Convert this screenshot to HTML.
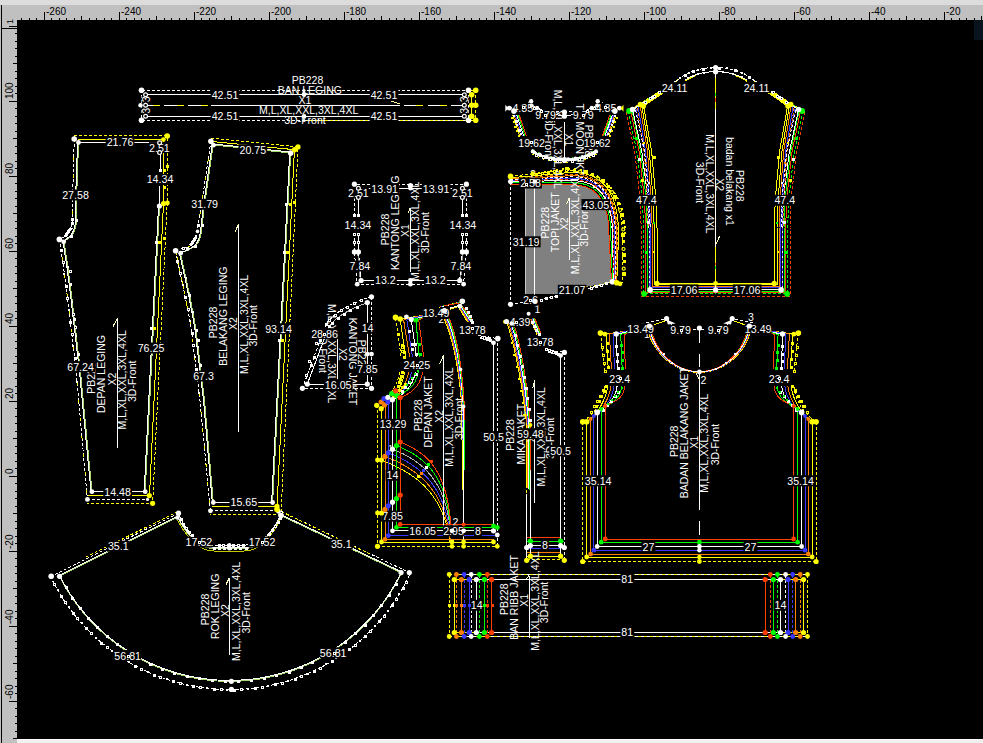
<!DOCTYPE html>
<html><head><meta charset="utf-8"><title>Pattern</title>
<style>
html,body{margin:0;padding:0;background:#000;overflow:hidden}
svg{display:block;position:absolute;left:0;top:0}
svg text{font-family:"Liberation Sans",sans-serif;font-size:10.67px;fill:#fff}
.tx text{font-size:10.5px}
svg text.rt{font-size:10px;fill:#000}
.ln polyline,.ln path{fill:none;stroke-width:1}
.ln path[fill]{}
</style></head><body>
<svg width="983" height="743" viewBox="0 0 983 743">
<rect x="0" y="0" width="983" height="743" fill="#000"/>
<g class="ln" shape-rendering="crispEdges" fill="none">
<polyline points="141.5,90 468.5,90" stroke="#ffffff" stroke-dasharray="3 2"/>
<polyline points="141.5,120 468.5,120" stroke="#ffffff" stroke-dasharray="3 2"/>
<polyline points="305,120 475.7,120" stroke="#ffff00" stroke-dasharray="3 2"/>
<polyline points="141.5,90 141.5,120" stroke="#ffffff" stroke-dasharray="3 2"/>
<polyline points="468.5,90 468.5,120" stroke="#ffffff" stroke-dasharray="3 2"/>
<polyline points="470.5,90 475.7,90" stroke="#ffff00" stroke-dasharray="3 2"/>
<polyline points="475.7,90 475.7,120" stroke="#ffff00" stroke-dasharray="3 2"/>
<polyline points="145.5,94 464.5,94" stroke="#ffffff"/>
<polyline points="145.5,116 464.5,116" stroke="#ffffff"/>
<polyline points="145.5,94 145.5,116" stroke="#ffffff"/>
<polyline points="464.5,94 464.5,116" stroke="#ffffff"/>
<polyline points="471.7,94 471.7,116" stroke="#ffff00"/>
<polyline points="146,105 152.8,105" stroke="#ffffff"/>
<polyline points="164.1,105 211,105" stroke="#ffffff" stroke-dasharray="12.5 11.4"/>
<polyline points="152.8,105 211,105" stroke="#ffff00" stroke-dasharray="7.3 16.6"/>
<polyline points="211,105 400,105" stroke="#ffffff"/>
<polyline points="404,105 464,105" stroke="#ffffff" stroke-dasharray="12 11.7"/>
<polyline points="416,105 464,105" stroke="#ffff00" stroke-dasharray="7 16.7"/>
<polyline points="391,101 400,104" stroke="#ffffa0"/>
<polyline points="78.5,142.5 77.3,180 76.4,200 76.4,219.5 76,225 74.8,230 72.8,234 70.3,236.5 67.5,239 63.7,241.8 65,248.4 66.2,255.9 67.5,264.2 68.7,273.3 70,282.9 71.2,292.9 72.5,303.3 73.7,313.8 74.9,324.4 76.2,335 80.5,372 92,491.5 145.2,491.5 159.5,206" stroke="#a8d870"/>
<polyline points="77.5,142.5 76.3,180 75.4,200 75.4,219.5 75,225 73.8,230 71.8,234 69.3,236.5 66.5,239 62.7,241.8 64,248.4 65.2,255.9 66.5,264.2 67.7,273.3 69,282.9 70.2,292.9 71.5,303.3 72.7,313.8 73.9,324.4 75.2,335 79.5,372 91,491.5" stroke="#ffffff"/>
<polyline points="158.5,206 144.2,491.5" stroke="#ffffff"/>
<polyline points="78.5,142.5 160,142.5" stroke="#ffffff"/>
<polyline points="92,491.5 145.2,491.5" stroke="#ffffff"/>
<polyline points="160,142.5 160,170.5" stroke="#ffffff"/>
<polyline points="160,186 159.5,206" stroke="#ffffff"/>
<polyline points="78,139.5 163.5,139.5 163.5,203 149.5,495.5 88,495.5" stroke="#ffff00"/>
<polyline points="74.2,139 73.2,180 72.2,200 72.2,224 71.2,228 65,236.5 59.4,239.4" stroke="#ffffff" stroke-dasharray="3 2"/>
<polyline points="74.2,139 73.2,180 72.2,200 72.2,224 71.2,228 65,236.5 59.4,239.4" stroke="#ffff00" stroke-dasharray="3 15"/>
<polyline points="59.4,239.4 60.8,249.4 62,256.9 63.3,265.2 64.5,274.3 65.8,283.9 67,293.9 68.3,304.3 69.5,314.8 70.7,325.4 72,336 76.3,373 87.4,499.4" stroke="#ffffff" stroke-dasharray="3 2"/>
<polyline points="59.4,239.4 60.8,249.4 62,256.9 63.3,265.2 64.5,274.3 65.8,283.9 67,293.9 68.3,304.3 69.5,314.8 70.7,325.4 72,336 76.3,373 87.4,499.4" stroke="#ffff00" stroke-dasharray="3 15"/>
<polyline points="87.4,499.4 149,499.4" stroke="#ffffff" stroke-dasharray="3 2"/>
<polyline points="74.2,135.5 167.2,135.5 167.2,203 152.6,503.3 87.4,503.3" stroke="#ffff00" stroke-dasharray="3 2"/>
<polyline points="74.2,135.5 74.2,139" stroke="#ffff00" stroke-dasharray="3 2"/>
<polyline points="117.5,318 117.5,448" stroke="#ffffff"/>
<polyline points="117.5,318 113,326.5" stroke="#ffffc0"/>
<polyline points="71.4,227.5 65.2,236.3" stroke="#ffffff" style="stroke-width:3"/>
<polyline points="290.7,153 213.2,145 203.7,211 202.3,225 201.3,233.3 199.8,239 197.5,243.5 194.2,246.5 188,250.3 180.4,253 182.1,260.6 183.8,268.2 185.5,275.9 187.2,283.7 188.8,291.5 190.4,299.3 191.9,307.1 193.4,314.8 194.7,322.4 196,330 204.4,399 213.3,502.5 272.6,502.5 290.7,153" stroke="#a8d870"/>
<polyline points="212.2,145 202.7,211 201.3,225 200.3,233.3 198.8,239 196.5,243.5 193.2,246.5 187,250.3 179.4,253 181.1,260.6 182.8,268.2 184.5,275.9 186.2,283.7 187.8,291.5 189.4,299.3 190.9,307.1 192.4,314.8 193.7,322.4 195,330 203.4,399 212.3,502.5" stroke="#ffffff"/>
<polyline points="289.7,153 271.6,502.5" stroke="#ffffff"/>
<polyline points="213.3,502.5 272.6,502.5" stroke="#ffffff"/>
<polyline points="213.2,144 290.7,152" stroke="#ffffff"/>
<polyline points="212,141.5 294.4,149.7 277,506.4 212,506.4" stroke="#ffff00"/>
<polyline points="210.9,141.2 200.4,212 198,225.3 196.6,236 190.5,245.6 186.7,247.5 175.6,250.5" stroke="#ffffff" stroke-dasharray="3 2"/>
<polyline points="210.9,141.2 200.4,212 198,225.3 196.6,236 190.5,245.6 186.7,247.5 175.6,250.5" stroke="#ffff00" stroke-dasharray="3 15"/>
<polyline points="175.6,250.7 177.6,261.6 179.3,269.2 181,276.9 182.7,284.7 184.3,292.5 185.9,300.3 187.4,308.1 188.9,315.8 190.2,323.4 191.5,331 199.9,400 210.4,510.8" stroke="#ffffff" stroke-dasharray="3 2"/>
<polyline points="175.6,250.7 177.6,261.6 179.3,269.2 181,276.9 182.7,284.7 184.3,292.5 185.9,300.3 187.4,308.1 188.9,315.8 190.2,323.4 191.5,331 199.9,400 210.4,510.8" stroke="#ffff00" stroke-dasharray="3 15"/>
<polyline points="210.4,510.8 276,510.8" stroke="#ffffff" stroke-dasharray="3 2"/>
<polyline points="210.9,138 298,146.9 281,514 210.4,514" stroke="#ffff00" stroke-dasharray="3 2"/>
<polyline points="176.1,252.2 178.1,263.1 179.8,270.7 181.5,278.4 183.2,286.2 184.8,294 186.4,301.8 187.9,309.6" stroke="#ffff00" stroke-dasharray="3 2"/>
<polyline points="238.5,224 238.5,432" stroke="#ffffff"/>
<polyline points="238.5,224 234.9,232.5" stroke="#ffffc0"/>
<polyline points="196.6,236.1 190.5,245.6" stroke="#ffffff" style="stroke-width:3"/>
<polyline points="281,518.1 278.7,522.5 276.2,527.1 273.3,531.6 270.1,535.9 266.6,540 262.8,543.6 258.6,546.6 254.1,549 249.2,550.5 244,551 214,551 214,551 209.1,550.6 204.5,549.3 200.2,547.2 196.2,544.5 192.5,541.3 189.1,537.6 185.9,533.5 182.8,529.1 180,524.5 177.3,519.8" stroke="#c8c800"/>
<polyline points="401.4,572.8 398.3,579.1 394.9,585.3 391.3,591.4 387.4,597.4 383.4,603.2 379.1,608.8 374.6,614.3 369.9,619.6 365,624.7 360,629.7 354.7,634.5 349.3,639 343.7,643.4 338,647.5 332.1,651.4 326,655.1 319.8,658.6 313.6,661.9 307.1,664.9 300.6,667.6 294,670.2 287.3,672.4 280.5,674.5 273.6,676.2 266.7,677.7 259.7,679 252.7,680 245.7,680.7 238.6,681.2 231.5,681.4 224.4,681.3 217.4,681 210.3,680.4 203.3,679.6 196.3,678.5 189.3,677.1 182.4,675.5 175.6,673.6 168.8,671.4 162.2,669 155.6,666.4 149.1,663.5 142.8,660.4 136.5,657.1 130.4,653.5 124.4,649.7 118.6,645.7 112.9,641.4 107.4,637 102.1,632.3 96.9,627.5 91.9,622.4 87.1,617.2 82.5,611.8 78.1,606.3 74,600.5 70,594.7 66.3,588.6 62.7,582.5 59.5,576.2" stroke="#a8d870"/>
<polyline points="401.4,571.8 398.3,578.1 394.9,584.3 391.3,590.4 387.4,596.4 383.4,602.2 379.1,607.8 374.6,613.3 369.9,618.6 365,623.7 360,628.7 354.7,633.5 349.3,638 343.7,642.4 338,646.5 332.1,650.4 326,654.1 319.8,657.6 313.6,660.9 307.1,663.9 300.6,666.6 294,669.2 287.3,671.4 280.5,673.5 273.6,675.2 266.7,676.7 259.7,678 252.7,679 245.7,679.7 238.6,680.2 231.5,680.4 224.4,680.3 217.4,680 210.3,679.4 203.3,678.6 196.3,677.5 189.3,676.1 182.4,674.5 175.6,672.6 168.8,670.4 162.2,668 155.6,665.4 149.1,662.5 142.8,659.4 136.5,656.1 130.4,652.5 124.4,648.7 118.6,644.7 112.9,640.4 107.4,636 102.1,631.3 96.9,626.5 91.9,621.4 87.1,616.2 82.5,610.8 78.1,605.3 74,599.5 70,593.7 66.3,587.6 62.7,581.5 59.5,575.2" stroke="#ffffff"/>
<polyline points="177.3,517.3 59.5,576.2" stroke="#a8d870"/>
<polyline points="177.3,516.3 59.5,575.2" stroke="#ffffff"/>
<polyline points="281,515.6 401.4,572.8" stroke="#a8d870"/>
<polyline points="281,514.6 401.4,571.8" stroke="#ffffff"/>
<polyline points="281,515.6 278.7,520 276.2,524.6 273.3,529.1 270.1,533.4 266.6,537.5 262.8,541.1 258.6,544.1 254.1,546.5 249.2,548 244,548.5 214,548.5 214,548.5 209.1,548.1 204.5,546.8 200.2,544.7 196.2,542 192.5,538.8 189.1,535.1 185.9,531 182.8,526.6 180,522 177.3,517.3" stroke="#a8d870"/>
<polyline points="281,514.6 278.7,519 276.2,523.6 273.3,528.1 270.1,532.4 266.6,536.5 262.8,540.1 258.6,543.1 254.1,545.5 249.2,547 244,547.5 214,547.5 214,547.5 209.1,547.1 204.5,545.8 200.2,543.7 196.2,541 192.5,537.8 189.1,534.1 185.9,530 182.8,525.6 180,521 177.3,516.3" stroke="#ffffff"/>
<polyline points="409.1,575.6 405.8,582.3 402.3,588.9 398.5,595.3 394.5,601.5 390.3,607.6 385.8,613.6 381.1,619.3 376.2,624.9 371.1,630.3 365.7,635.5 360.2,640.5 354.6,645.3 348.7,649.9 342.7,654.2 336.5,658.4 330.1,662.2 323.7,665.9 317,669.3 310.3,672.4 303.5,675.3 296.5,678 289.5,680.4 282.3,682.5 275.1,684.3 267.9,685.9 260.5,687.2 253.2,688.2 245.8,688.9 238.4,689.4 230.9,689.6 223.5,689.5 216.1,689.1 208.6,688.5 201.3,687.6 193.9,686.4 186.6,684.9 179.4,683.1 172.3,681.1 165.2,678.8 158.2,676.3 151.3,673.5 144.5,670.4 137.9,667.1 131.3,663.6 125,659.8 118.7,655.7 112.6,651.4 106.7,646.9 100.9,642.2 95.4,637.3 90,632.2 84.8,626.8 79.8,621.3 75.1,615.6 70.5,609.7 66.2,603.7 62.1,597.5 58.2,591.1 54.6,584.6 51.2,578" stroke="#ffffff" stroke-dasharray="3 2"/>
<polyline points="178.5,513.2 51.2,576.3" stroke="#ffffff" stroke-dasharray="3 2"/>
<polyline points="178,511.5 86,557" stroke="#ffff00" stroke-dasharray="3 2"/>
<polyline points="281.5,511.5 409.3,572.6" stroke="#ffffff" stroke-dasharray="3 2"/>
<polyline points="277,509.5 372,555" stroke="#ffff00" stroke-dasharray="3 2"/>
<polyline points="283,512 281,516.6 278.5,521.2 275.6,525.7 272.3,530.1 268.6,534.1 264.6,537.7 260.4,540.7 255.8,543 251,544.5 246,545 212,545 212,545 207.3,544.5 202.9,543.1 198.7,540.9 194.9,538.1 191.3,534.6 188.1,530.8 185.1,526.6 182.6,522.2 180.3,517.7 178.5,513.2" stroke="#ffffff" stroke-dasharray="3 2"/>
<polyline points="51.2,576.3 51.2,578" stroke="#ffffff" stroke-dasharray="3 2"/>
<polyline points="409.3,572.6 409.1,575.6" stroke="#ffffff" stroke-dasharray="3 2"/>
<polyline points="229.4,577.5 229.4,655" stroke="#ffffff"/>
<polyline points="229.4,577.5 225.6,585.5" stroke="#ffffc0"/>
<polyline points="410.4,184.2 354.4,184.2 354.4,215" stroke="#ffffff" stroke-dasharray="3 2"/>
<polyline points="410.4,188.3 358.4,188.3 358.4,215" stroke="#ffffff"/>
<polyline points="354.4,233 354.4,252 357.2,284.2 410.4,284.2" stroke="#ffffff" stroke-dasharray="3 2"/>
<polyline points="358.4,233 358.4,252 361.1,280.5 410.4,280.5" stroke="#ffffff"/>
<polyline points="357.6,252 360.3,280.5" stroke="#909090"/>
<polyline points="410.4,184.2 466.4,184.2 466.4,215" stroke="#ffffff" stroke-dasharray="3 2"/>
<polyline points="410.4,188.3 462.4,188.3 462.4,215" stroke="#ffffff"/>
<polyline points="466.4,233 466.4,252 463.6,284.2 410.4,284.2" stroke="#ffffff" stroke-dasharray="3 2"/>
<polyline points="462.4,233 462.4,252 459.7,280.5 410.4,280.5" stroke="#ffffff"/>
<polyline points="463.2,252 460.5,280.5" stroke="#909090"/>
<polyline points="410.4,207.5 410.4,272" stroke="#ffffff"/>
<polyline points="410.4,207.5 408.2,212.5" stroke="#ffffc0"/>
<polyline points="307.3,384.1 329.1,325.9" stroke="#ffffff"/>
<polyline points="329.1,325.9 331.4,323.3 334.1,320.7 337.1,318.2 340.5,315.7 344.3,313.3 348.4,311 352.7,308.8 357.3,306.6 362.2,304.6 367.3,302.6" stroke="#c0c0c0"/>
<polyline points="367.3,302.6 367.3,384.1 307.3,384.1" stroke="#ffffff"/>
<polyline points="302.4,388.3 326.4,323.5" stroke="#ffffff" stroke-dasharray="3 2"/>
<polyline points="326.4,323.5 329,320.3 332.1,317.2 335.8,314.1 339.9,311.1 344.5,308.2 349.4,305.4 354.6,302.9 360.1,300.6 365.7,298.5 371.5,296.8" stroke="#ffffff" stroke-dasharray="3 2"/>
<polyline points="371.5,296.8 371.5,388.3 302.4,388.3" stroke="#ffffff" stroke-dasharray="3 2"/>
<polyline points="337.6,331.5 337.6,380" stroke="#ffffff"/>
<polyline points="395.5,318 401.3,357.6" stroke="#ffff00" stroke-dasharray="3 2"/>
<polyline points="400,372 398.6,377.7 396.7,382.9 394.3,387.6 391.5,391.9 388.2,395.8 384.7,399.3 380.8,402.4 376.7,405.3" stroke="#ffff00" stroke-dasharray="3 2"/>
<polyline points="377.5,405.3 377.5,546.3 497.3,546.3" stroke="#ffff00" stroke-dasharray="3 2"/>
<polyline points="497.3,546.3 497.3,339" stroke="#ffffff" stroke-dasharray="3 2"/>
<polyline points="400.2,319.5 440.2,312" stroke="#ffff00"/>
<polyline points="400.2,320 405.8,357" stroke="#ffff00"/>
<polyline points="404.8,372 403.3,378 401.3,383.9 398.7,389.5 395.8,394.8 392.5,399.4 388.9,403.4 385.2,406.4 381.5,408.5" stroke="#ffff00"/>
<polyline points="381.5,408.5 381.5,542 463.6,542" stroke="#ffff00"/>
<polyline points="381.5,460 387.1,462.3 392.8,464.8 398.4,467.6 403.9,470.6 409.3,473.9 414.5,477.5 419.6,481.5 424.4,486 428.9,490.9 433.2,496.4 437.1,502.4 440.6,508.9 443.6,516.2 446.3,524 448.4,532.6 450,542" stroke="#ffff00"/>
<polyline points="403.6,319.5 441,311.7" stroke="#ff8000"/>
<polyline points="403.6,320 409.7,357" stroke="#ff8000"/>
<polyline points="408.7,372 407.2,377.8 405.1,383.3 402.5,388.4 399.5,393 396.1,397 392.5,400.4 388.8,403.1 385,405" stroke="#ff8000"/>
<polyline points="385,405 385,539.3 463.6,539.3" stroke="#ff8000"/>
<polyline points="385,456.4 390.6,458.7 396.1,461.2 401.6,464 406.9,467 412.1,470.3 417.1,474 421.8,478 426.4,482.5 430.6,487.5 434.6,493 438.2,499 441.4,505.7 444.3,513 446.7,521 448.7,529.8 450.2,539.3" stroke="#ff8000"/>
<polyline points="406.9,319.5 441.8,311.4" stroke="#3838ff"/>
<polyline points="406.9,320 412.5,357" stroke="#3838ff"/>
<polyline points="411.5,372 410.1,377.7 408,382.9 405.5,387.5 402.5,391.5 399.2,395 395.7,397.9 392,400.2 388.3,402" stroke="#3838ff"/>
<polyline points="388.3,402 388.3,535.6 463.6,535.6" stroke="#3838ff"/>
<polyline points="388.3,452.8 393.9,455.1 399.3,457.6 404.6,460.4 409.8,463.4 414.7,466.7 419.5,470.4 424,474.4 428.3,478.9 432.3,483.9 435.9,489.4 439.3,495.4 442.3,502.1 444.9,509.4 447.2,517.4 449,526.1 450.4,535.6" stroke="#3838ff"/>
<polyline points="411.4,320 442.6,311.1" stroke="#ffffff"/>
<polyline points="411.4,320 416.4,357" stroke="#ffffff"/>
<polyline points="415.4,372 414,377.6 412,382.5 409.5,386.7 406.6,390.3 403.3,393.4 399.9,395.9 396.2,398 392.5,399.7" stroke="#ffffff"/>
<polyline points="392.5,399.7 392.5,530.8 493.5,530.8" stroke="#ffffff"/>
<polyline points="392.5,449.2 398,451.5 403.4,454 408.5,456.8 413.4,459.8 418.1,463.1 422.5,466.7 426.7,470.7 430.6,475.1 434.2,480.1 437.6,485.5 440.6,491.4 443.3,498 445.7,505.1 447.7,513 449.3,521.5 450.6,530.8" stroke="#b0b0b0"/>
<polyline points="415.9,320 443.4,310.8" stroke="#00ff00"/>
<polyline points="415.9,320 419.2,357" stroke="#00ff00"/>
<polyline points="418.2,372 416.8,377.4 414.9,381.9 412.7,385.4 410,388.2 407,390.5 403.7,392.4 400.2,394 396.5,395.5" stroke="#00ff00"/>
<polyline points="396.5,395.5 396.5,527.4 463.6,527.4" stroke="#00ff00"/>
<polyline points="396.5,445.6 402,447.9 407.2,450.4 412.2,453.2 416.9,456.2 421.3,459.5 425.4,463.1 429.3,467.1 432.9,471.6 436.2,476.5 439.2,481.9 441.9,487.9 444.3,494.5 446.4,501.6 448.1,509.5 449.6,518.1 450.8,527.4" stroke="#00ff00"/>
<polyline points="418.7,320 444.2,310.5" stroke="#ff4000"/>
<polyline points="418.7,320 423.7,357" stroke="#ff4000"/>
<polyline points="422.7,372 421.3,377.5 419.3,382.2 416.9,386 414.1,389.2 410.9,391.9 407.5,394.1 403.9,395.9 400.2,397.5" stroke="#ff4000"/>
<polyline points="400.2,397.5 400.2,524.4 463.6,524.4" stroke="#ff4000"/>
<polyline points="400.2,442 405.7,444.3 410.8,446.8 415.6,449.6 420.1,452.6 424.3,455.9 428.1,459.5 431.7,463.6 435,468.1 438,473 440.6,478.5 443,484.5 445.2,491.1 447,498.4 448.6,506.3 449.9,515 451,524.4" stroke="#ff4000"/>
<polyline points="463.6,530.8 493.5,530.8" stroke="#ffffff"/>
<polyline points="463.6,527.4 497.3,527.4" stroke="#00ff00"/>
<polyline points="463.6,535.6 497.3,535.6" stroke="#3838ff"/>
<polyline points="463.6,524.4 493.5,524.4" stroke="#ff4000"/>
<polyline points="463.6,539.3 493.5,539.3" stroke="#ff8000"/>
<polyline points="463.6,542 493.5,542" stroke="#ffff00"/>
<polyline points="440.3,311.5 442.2,315.1 444,319 445.8,323.1 447.5,327.6 449.1,332.4 450.7,337.4 452.2,342.8 453.6,348.4 454.9,354.4 456.1,360.8 457.3,367.4 458.4,374.4 459.4,381.8 460.3,389.5 461.1,397.6 461.8,406 461.8,440" stroke="#ffff00"/>
<polyline points="441.4,311.5 443.3,315.1 445.1,319 446.9,323.1 448.5,327.6 450.1,332.4 451.6,337.4 453.1,342.8 454.4,348.4 455.7,354.4 456.9,360.8 458,367.4 459,374.4 460,381.8 460.8,389.5 461.6,397.6 462.3,406 462.3,444" stroke="#ff8000"/>
<polyline points="442.5,311.5 444.4,315.1 446.2,319 447.9,323.1 449.6,327.6 451.1,332.4 452.6,337.4 454,342.8 455.3,348.4 456.5,354.4 457.7,360.8 458.7,367.4 459.7,374.4 460.6,381.8 461.4,389.5 462.2,397.6 462.8,406 462.8,448" stroke="#3838ff"/>
<polyline points="443.6,311.5 445.5,315.1 447.3,319 449,323.1 450.6,327.6 452.1,332.4 453.6,337.4 454.9,342.8 456.2,348.4 457.4,354.4 458.5,360.8 459.5,367.4 460.4,374.4 461.3,381.8 462,389.5 462.7,397.6 463.3,406 463.3,452" stroke="#ffffff"/>
<polyline points="444.7,311.5 446.6,315.1 448.4,319 450,323.1 451.6,327.6 453.1,332.4 454.5,337.4 455.8,342.8 457.1,348.4 458.2,354.4 459.2,360.8 460.2,367.4 461.1,374.4 461.9,381.8 462.6,389.5 463.2,397.6 463.8,406 463.8,456" stroke="#00ff00"/>
<polyline points="445.8,311.5 447.7,315.1 449.4,319 451.1,323.1 452.7,327.6 454.1,332.4 455.5,337.4 456.8,342.8 457.9,348.4 459,354.4 460,360.8 460.9,367.4 461.8,374.4 462.5,381.8 463.2,389.5 463.8,397.6 464.3,406 464.3,460" stroke="#ff4000"/>
<polyline points="463.6,406 463.6,546.3" stroke="#ffffff"/>
<polyline points="462.6,440 462.6,490" stroke="#ffff00"/>
<polyline points="464.6,420 464.6,470" stroke="#00ff00"/>
<polyline points="438.9,307.3 462.3,301.6" stroke="#ffff00"/>
<polyline points="457.5,305.2 467.6,322" stroke="#ffff00"/>
<polyline points="439.9,307 462.3,301.8" stroke="#ff8000"/>
<polyline points="458.5,305.4 468.6,321.7" stroke="#ff8000"/>
<polyline points="440.9,306.7 462.3,301.9" stroke="#3838ff"/>
<polyline points="459.5,305.6 469.6,321.4" stroke="#3838ff"/>
<polyline points="441.9,306.4 462.3,302.1" stroke="#ffffff"/>
<polyline points="460.5,305.8 470.6,321.1" stroke="#ffffff"/>
<polyline points="442.9,306.1 462.3,302.2" stroke="#00ff00"/>
<polyline points="461.5,306 471.6,320.8" stroke="#00ff00"/>
<polyline points="443.9,305.8 462.3,302.4" stroke="#ff4000"/>
<polyline points="462.5,306.2 472.6,320.5" stroke="#ff4000"/>
<polyline points="450.3,309.1 460.1,305.9" stroke="#ffff00"/>
<polyline points="450.3,308.1 460.1,304.9" stroke="#ffffff"/>
<polyline points="478,335.2 497.8,338.6" stroke="#ffffff" stroke-dasharray="3 2"/>
<polyline points="480,337.8 493.5,342.8 493.5,530.8" stroke="#ffffff"/>
<polyline points="443.5,355.5 443.5,527" stroke="#ffffff"/>
<polyline points="443.5,355.5 439.5,364.5" stroke="#ffffc0"/>
<polyline points="507,323 508.7,328.3 510.3,333.9 511.9,339.9 513.5,346.1 515,352.6 516.5,359.2 517.9,366 519.2,372.9 520.4,379.8 521.6,386.7 522.7,393.5 523.7,400.2 524.5,406.8 525.3,413.1 526,419.2 526.5,425 526.5,487" stroke="#ffff00"/>
<polyline points="530.5,319 537,334.5" stroke="#ffff00"/>
<polyline points="526.7,556.2 560.6,556.2" stroke="#ffff00"/>
<polyline points="508.3,323 510,328.3 511.6,333.9 513.2,339.9 514.7,346.1 516.2,352.6 517.6,359.2 519,366 520.3,372.9 521.5,379.8 522.6,386.7 523.6,393.5 524.6,400.2 525.4,406.8 526.1,413.1 526.7,419.2 527.2,425 527.2,487.8" stroke="#ff8000"/>
<polyline points="531.3,318.8 537.8,334.2" stroke="#ff8000"/>
<polyline points="526.7,552.2 560.6,552.2" stroke="#ff8000"/>
<polyline points="509.6,323 511.3,328.3 512.9,333.9 514.5,339.9 516,346.1 517.4,352.6 518.8,359.2 520.1,366 521.4,372.9 522.5,379.8 523.6,386.7 524.6,393.5 525.5,400.2 526.3,406.8 526.9,413.1 527.5,419.2 528,425 528,488.6" stroke="#3838ff"/>
<polyline points="532.1,318.6 538.6,333.9" stroke="#3838ff"/>
<polyline points="526.7,548.6 564.3,548.6" stroke="#3838ff"/>
<polyline points="510.9,323 512.6,328.3 514.2,333.9 515.7,339.9 517.2,346.1 518.6,352.6 520,359.2 521.2,366 522.4,372.9 523.5,379.8 524.6,386.7 525.5,393.5 526.4,400.2 527.1,406.8 527.8,413.1 528.3,419.2 528.8,425 528.8,489.4" stroke="#ffffff"/>
<polyline points="532.9,318.4 539.4,333.6" stroke="#ffffff"/>
<polyline points="526.7,545.5 560.6,545.5" stroke="#ffffff"/>
<polyline points="512.2,323 513.9,328.3 515.4,333.9 517,339.9 518.4,346.1 519.8,352.6 521.1,359.2 522.4,366 523.5,372.9 524.6,379.8 525.6,386.7 526.5,393.5 527.3,400.2 528,406.8 528.6,413.1 529.1,419.2 529.5,425 529.5,490.2" stroke="#00ff00"/>
<polyline points="533.7,318.2 540.2,333.3" stroke="#00ff00"/>
<polyline points="526.7,541.1 564.3,541.1" stroke="#00ff00"/>
<polyline points="513.5,323 515.2,328.3 516.7,333.9 518.2,339.9 519.7,346.1 521,352.6 522.3,359.2 523.5,366 524.6,372.9 525.6,379.8 526.6,386.7 527.4,393.5 528.2,400.2 528.8,406.8 529.4,413.1 529.9,419.2 530.2,425 530.2,491" stroke="#ff4000"/>
<polyline points="534.5,318 541,333" stroke="#ff4000"/>
<polyline points="526.7,537.5 560.6,537.5" stroke="#ff4000"/>
<polyline points="526.3,425 526.3,494" stroke="#ffff00" stroke-dasharray="3 2"/>
<polyline points="526.3,494 526.3,559.9" stroke="#ffffff"/>
<polyline points="530.4,470 530.4,556" stroke="#ffffff"/>
<polyline points="526.7,559.9 564.3,559.9" stroke="#ffff00" stroke-dasharray="3 2"/>
<polyline points="560.6,355.6 560.6,556.2" stroke="#ffffff"/>
<polyline points="564.4,352.4 564.4,559.9" stroke="#ffffff" stroke-dasharray="3 2"/>
<polyline points="545.6,349.4 564.4,352.4" stroke="#ffffff" stroke-dasharray="3 2"/>
<polyline points="548,352 560.6,355.6" stroke="#ffffff"/>
<polyline points="534.6,380 534.6,502.5" stroke="#ffffff"/>
<polyline points="534.6,380 532.8,388" stroke="#ffffc0"/>
<polyline points="512.6,114.8 519.8,136" stroke="#ffff00"/>
<polyline points="513.9,114.8 521.1,136" stroke="#ff8000"/>
<polyline points="515.2,114.8 522.4,136" stroke="#3838ff"/>
<polyline points="516.5,114.8 523.7,136" stroke="#ffffff"/>
<polyline points="517.8,114.8 525,136" stroke="#00ff00"/>
<polyline points="519.1,114.8 526.3,136" stroke="#ff4000"/>
<polyline points="509.3,108.2 531.1,101.3" stroke="#ffffff" stroke-dasharray="3 2"/>
<polyline points="513.9,111.1 531.7,105.6" stroke="#ffffff"/>
<polyline points="531.7,105.6 537,108" stroke="#ffffff"/>
<polyline points="537,108 552.4,114 564.4,116.2" stroke="#ffffff"/>
<polyline points="556.4,111.5 564.4,112.2" stroke="#ffffff" stroke-dasharray="3 2"/>
<polyline points="616.2,114.8 609,136" stroke="#ffff00"/>
<polyline points="614.9,114.8 607.7,136" stroke="#ff8000"/>
<polyline points="613.6,114.8 606.4,136" stroke="#3838ff"/>
<polyline points="612.3,114.8 605.1,136" stroke="#ffffff"/>
<polyline points="611,114.8 603.8,136" stroke="#00ff00"/>
<polyline points="609.7,114.8 602.5,136" stroke="#ff4000"/>
<polyline points="619.5,108.2 597.7,101.3" stroke="#ffffff" stroke-dasharray="3 2"/>
<polyline points="614.9,111.1 597.1,105.6" stroke="#ffffff"/>
<polyline points="597.1,105.6 591.8,108" stroke="#ffffff"/>
<polyline points="591.8,108 576.4,114 564.4,116.2" stroke="#ffffff"/>
<polyline points="572.4,111.5 564.4,112.2" stroke="#ffffff" stroke-dasharray="3 2"/>
<polyline points="531.7,151.2 533.8,152.3 535.9,153.4 537.9,154.4 540,155.2 542,156 544,156.8 546,157.4 548,158 550,158.5 552,158.9 554,159.2 556.1,159.5 558.1,159.7 560.2,159.9 562.3,160 564.4,160 566.6,160 568.7,159.9 570.8,159.7 572.8,159.5 574.9,159.2 576.9,158.9 578.9,158.5 581,158 583,157.4 585,156.8 587,156 589,155.2 591,154.4 593.1,153.4 595.1,152.3 597.2,151.2" stroke="#ffffff" style="stroke-width:3"/>
<polyline points="531.7,153.7 533.8,154.8 535.9,155.9 537.9,156.9 540,157.7 542,158.5 544,159.3 546,159.9 548,160.5 550,161 552,161.4 554,161.7 556.1,162 558.1,162.2 560.2,162.4 562.3,162.5 564.4,162.5 566.6,162.5 568.7,162.4 570.8,162.2 572.8,162 574.9,161.7 576.9,161.4 578.9,161 581,160.5 583,159.9 585,159.3 587,158.5 589,157.7 591,156.9 593.1,155.9 595.1,154.8 597.2,153.7" stroke="#ffff00" stroke-dasharray="2 4"/>
<polyline points="531.7,149.2 533.8,150.3 535.9,151.4 537.9,152.4 540,153.2 542,154 544,154.8 546,155.4 548,156 550,156.5 552,156.9 554,157.2 556.1,157.5 558.1,157.7 560.2,157.9 562.3,158 564.4,158 566.6,158 568.7,157.9 570.8,157.7 572.8,157.5 574.9,157.2 576.9,156.9 578.9,156.5 581,156 583,155.4 585,154.8 587,154 589,153.2 591,152.4 593.1,151.4 595.1,150.3 597.2,149.2" stroke="#00ff00" stroke-dasharray="1 6"/>
<polyline points="564.4,121.5 564.4,159.8" stroke="#ffffff"/>
<path d="M525.8 184.8 L572 184.8 C595 184.8 609 200 609 235 L611.3 282.3 L560 291.5 L560 293.5 L525.8 293.5 Z" stroke="none" style="fill:#808080;"/>
<polyline points="525.8,184.8 525.8,293.5" stroke="#c8c8c8"/>
<path d="M510.5 177.8 L572 172.3 C600.9 172.3 618.6 191.1 618.6 235 L616.8 282" stroke="#ffff00"/>
<path d="M510.5 179 L572 175.6 C599.5 175.6 616.4 193.4 616.4 235 L615.6 282" stroke="#ff8000"/>
<path d="M510.5 180.2 L572 178.2 C598.4 178.2 614.6 195.2 614.6 235 L614.6 282" stroke="#3838ff"/>
<path d="M510.5 181.5 L572 180.6 C597.2 180.6 612.6 196.9 612.6 235 L613.5 282" stroke="#ffffff"/>
<path d="M510.5 182.8 L572 182.6 C596.1 182.6 610.8 198.3 610.8 235 L612.5 282" stroke="#00ff00"/>
<path d="M510.5 184.6 L572 184.8 C594.9 184.8 609 199.9 609 235 L611.5 282" stroke="#ff4000"/>
<path d="M510.5 180.8 L572 179.4 C597.8 179.4 613.6 196.1 613.6 235 L614.1 282" stroke="#ff4000" stroke-dasharray="3 2"/>
<path d="M510.5 179.6 L572 176.9 C599 176.9 615.5 194.3 615.5 235 L615.1 282" stroke="#ffffff" stroke-dasharray="3 2"/>
<path d="M510.5 178.4 L572 174 C600.2 174 617.5 192.3 617.5 235 L616.2 282" stroke="#ff8000" stroke-dasharray="3 2"/>
<path d="M510.5 176.2 L566 170.3 C596 170.3 622 188 622.4 235 L622.8 283" stroke="#ffff00" stroke-dasharray="3 2"/>
<path d="M532 174 L566 168.8 C598 168.8 625 188 625 235" stroke="#ffff00" stroke-dasharray="2 4" style="stroke-width:2;"/>
<polyline points="510.5,181.5 510.5,304.3" stroke="#ffffff" stroke-dasharray="3 2"/>
<polyline points="510.5,304.3 534.8,301" stroke="#ffffff" stroke-dasharray="3 2"/>
<polyline points="534.8,181.5 534.8,301" stroke="#ffffff"/>
<polyline points="534.8,301 590,288 612.4,281.7" stroke="#ffffff" stroke-dasharray="2 3"/>
<polyline points="560,291.5 611.3,282.3" stroke="#ffff00" stroke-dasharray="2 3"/>
<polyline points="569.3,197.7 569.3,260" stroke="#ffffff"/>
<polyline points="569.3,197.7 566.8,203.7" stroke="#ffffc0"/>
<polyline points="678,79.8 680.3,78 682.5,76.5 684.8,75 687.2,73.8 689.5,72.6 691.8,71.6 694.2,70.8 696.6,70 699,69.4 701.3,68.9 703.7,68.5 706.1,68.1 708.5,67.9 710.9,67.7 713.2,67.6 715.6,67.6 717.9,67.6 720.3,67.7 722.6,67.9 725,68.1 727.4,68.5 729.7,68.9 732.1,69.4 734.5,70 736.9,70.8 739.2,71.6 741.6,72.6 744,73.8 746.3,75 748.7,76.5 751,78 753.3,79.8" stroke="#ffffff" stroke-dasharray="3 2"/>
<polyline points="684.7,80.4 686.6,79.2 688.6,78 690.5,77 692.4,76.1 694.3,75.3 696.2,74.6 698.1,74 700,73.5 702,73 703.9,72.6 705.8,72.3 707.7,72.1 709.7,71.9 711.7,71.8 713.6,71.7 715.6,71.7 717.5,71.7 719.5,71.8 721.4,71.9 723.3,72.1 725.3,72.3 727.2,72.6 729.2,73 731.1,73.5 733.1,74 735,74.6 737,75.3 739,76.1 741,77 743.1,78 745.1,79.2 747.2,80.4" stroke="#ffffff"/>
<polyline points="684.7,81.4 686.6,80.2 688.6,79 690.5,78 692.4,77.1 694.3,76.3 696.2,75.6" stroke="#ffff00"/>
<polyline points="735,75.6 737,76.3 739,77.1 741,78 743.1,79 745.1,80.2 747.2,81.4" stroke="#ffff00"/>
<polyline points="626.4,112.2 634.7,152 640,198 641.2,228 641.2,296 715.6,296" stroke="#ff4000" stroke-dasharray="3 2"/>
<polyline points="626.4,112.2 678,79.7" stroke="#ffff00" stroke-dasharray="3 2"/>
<polyline points="628.2,111.4 636.9,152 642.4,198 643.6,228 643.6,293.9 715.6,293.9" stroke="#00ff00" stroke-dasharray="3 2"/>
<polyline points="628.2,111.4 678,79.8" stroke="#00ff00" stroke-dasharray="3 2"/>
<polyline points="630.6,110.4 639.2,152 644.4,198 645.6,228 645.6,292.5 715.6,292.5" stroke="#ff4000"/>
<polyline points="630.6,110.4 678,79.9" stroke="#ffff00"/>
<polyline points="632,109.8 640.7,152 646,198 647.2,228 647.2,291.4 715.6,291.4" stroke="#00ff00"/>
<polyline points="632,109.8 678,79.9" stroke="#00ff00"/>
<polyline points="632.6,109.6 641.9,152 647.8,198 649,228 649,289.9 715.6,289.9" stroke="#ffffff"/>
<polyline points="632.6,109.6 678,79.9" stroke="#ffffff"/>
<polyline points="638.2,107.2 645.7,152 649.4,198 650.6,228 650.6,287.9 715.6,287.9" stroke="#3838ff"/>
<polyline points="638.2,107.2 678,80.2" stroke="#3838ff"/>
<polyline points="640.2,106.4 647.6,152 651,198 652.2,228 652.2,286.3 715.6,286.3" stroke="#ff8000"/>
<polyline points="640.2,106.4 678,80.2" stroke="#ff8000"/>
<polyline points="641.8,105.7 649.4,152 653,198 654.2,228 654.2,284.8 715.6,284.8" stroke="#ffff00"/>
<polyline points="641.8,105.7 678,80.3" stroke="#ffff00"/>
<polyline points="643.4,105 651.7,152 655.8,198 657,228 657,283.4 715.6,283.4" stroke="#ffff00"/>
<polyline points="643.4,105 678,80.4" stroke="#ffff00"/>
<polyline points="636.1,109 644.2,152 648.2,198 649.2,228 649.2,288" stroke="#3838ff" stroke-dasharray="3 2"/>
<polyline points="637.2,108.5 644.2,152 647.2,198 648.2,228" stroke="#ff8000" stroke-dasharray="3 2"/>
<polyline points="635.6,110 644.6,152 649.2,198 650.2,228" stroke="#ffffff" stroke-dasharray="3 2"/>
<polyline points="678,79.8 632.6,109.9" stroke="#ffffff"/>
<polyline points="663.6,92 643.4,105.5" stroke="#ffff00" style="stroke-width:2"/>
<polyline points="804.8,112.2 796.5,152 791.2,198 790,228 790,296 715.6,296" stroke="#ff4000" stroke-dasharray="3 2"/>
<polyline points="804.8,112.2 753.2,79.7" stroke="#ffff00" stroke-dasharray="3 2"/>
<polyline points="803,111.4 794.3,152 788.8,198 787.6,228 787.6,293.9 715.6,293.9" stroke="#00ff00" stroke-dasharray="3 2"/>
<polyline points="803,111.4 753.2,79.8" stroke="#00ff00" stroke-dasharray="3 2"/>
<polyline points="800.6,110.4 792,152 786.8,198 785.6,228 785.6,292.5 715.6,292.5" stroke="#ff4000"/>
<polyline points="800.6,110.4 753.2,79.9" stroke="#ffff00"/>
<polyline points="799.2,109.8 790.5,152 785.2,198 784,228 784,291.4 715.6,291.4" stroke="#00ff00"/>
<polyline points="799.2,109.8 753.2,79.9" stroke="#00ff00"/>
<polyline points="798.6,109.6 789.3,152 783.4,198 782.2,228 782.2,289.9 715.6,289.9" stroke="#ffffff"/>
<polyline points="798.6,109.6 753.2,79.9" stroke="#ffffff"/>
<polyline points="793,107.2 785.5,152 781.8,198 780.6,228 780.6,287.9 715.6,287.9" stroke="#3838ff"/>
<polyline points="793,107.2 753.2,80.2" stroke="#3838ff"/>
<polyline points="791,106.4 783.6,152 780.2,198 779,228 779,286.3 715.6,286.3" stroke="#ff8000"/>
<polyline points="791,106.4 753.2,80.2" stroke="#ff8000"/>
<polyline points="789.4,105.7 781.8,152 778.2,198 777,228 777,284.8 715.6,284.8" stroke="#ffff00"/>
<polyline points="789.4,105.7 753.2,80.3" stroke="#ffff00"/>
<polyline points="787.8,105 779.5,152 775.4,198 774.2,228 774.2,283.4 715.6,283.4" stroke="#ffff00"/>
<polyline points="787.8,105 753.2,80.4" stroke="#ffff00"/>
<polyline points="795.1,109 787,152 783,198 782,228 782,288" stroke="#3838ff" stroke-dasharray="3 2"/>
<polyline points="794,108.5 787,152 784,198 783,228" stroke="#ff8000" stroke-dasharray="3 2"/>
<polyline points="795.6,110 786.6,152 782,198 781,228" stroke="#ffffff" stroke-dasharray="3 2"/>
<polyline points="753.2,79.8 798.6,109.9" stroke="#ffffff"/>
<polyline points="767.6,92 787.8,105.5" stroke="#ffff00" style="stroke-width:2"/>
<polyline points="715.6,71.7 715.6,289.9" stroke="#ffffff"/>
<polyline points="715.6,78 715.6,109" stroke="#ffff00"/>
<polyline points="715.6,98 715.6,102" stroke="#ff4000"/>
<polyline points="715.6,93 715.6,96" stroke="#00ff00"/>
<polyline points="715.6,247 715.6,283" stroke="#ffff00"/>
<polyline points="715.6,266 715.6,269" stroke="#00ff00"/>
<polyline points="715.6,263 715.6,265" stroke="#ff4000"/>
<polyline points="715.6,245 719.7,236" stroke="#ffffc0"/>
<polyline points="600.6,333.1 604.9,372" stroke="#ffff00" stroke-dasharray="3 2"/>
<polyline points="604.9,386 604,391.8 602.4,397.2 600.3,402.3 597.6,407 594.5,411.2 590.9,415.1 587,418.6 582.7,421.7" stroke="#ffff00" stroke-dasharray="3 2"/>
<polyline points="582.7,421.7 582.7,561.5 699.4,561.5" stroke="#ffff00" stroke-dasharray="3 2"/>
<polyline points="606,334 649.4,327.7" stroke="#ffff00"/>
<polyline points="606,334 608.3,369" stroke="#ffff00"/>
<polyline points="607.8,386 606.8,391.3 605.1,396.8 602.8,402.1 600.1,407.2 596.9,411.9 593.6,416 590.1,419.3 586.7,421.7" stroke="#ffff00"/>
<polyline points="586.7,421.7 586.7,557 699.4,557" stroke="#ffff00"/>
<polyline points="609.4,334 649.4,327.3" stroke="#ff8000"/>
<polyline points="609.4,334 611.4,369" stroke="#ff8000"/>
<polyline points="610.9,386 610,391.2 608.4,396.4 606.2,401.3 603.6,405.9 600.6,410.1 597.4,413.7 594,416.7 590.6,419" stroke="#ff8000"/>
<polyline points="590.6,419 590.6,554.1 699.4,554.1" stroke="#ff8000"/>
<polyline points="613,334 649.4,326.9" stroke="#3838ff"/>
<polyline points="613,334 614.5,369" stroke="#3838ff"/>
<polyline points="614,386 613.1,391.1 611.5,395.9 609.3,400.3 606.7,404.4 603.8,408 600.5,411.2 597.2,413.8 593.8,416" stroke="#3838ff"/>
<polyline points="593.8,416 593.8,550.2 699.4,550.2" stroke="#3838ff"/>
<polyline points="616,334.5 649.4,326.5" stroke="#ffffff"/>
<polyline points="616,334 617.6,369" stroke="#ffffff"/>
<polyline points="617.1,386 616.2,390.9 614.6,395.3 612.5,399.2 610,402.6 607.1,405.5 603.9,408.1 600.6,410.4 597.2,412.4" stroke="#ffffff"/>
<polyline points="597.2,412.4 597.2,546.5 699.4,546.5" stroke="#ffffff"/>
<polyline points="620.7,334.5 649.4,326.1" stroke="#00ff00"/>
<polyline points="620.7,334 622.2,369" stroke="#00ff00"/>
<polyline points="621.7,386 620.8,390.8 619.1,394.8 616.9,398.1 614.3,400.9 611.2,403.2 608,405.3 604.6,407.2 601.2,409" stroke="#00ff00"/>
<polyline points="601.2,409 601.2,542.2 699.4,542.2" stroke="#00ff00"/>
<polyline points="624.3,334.5 649.4,325.7" stroke="#ff4000"/>
<polyline points="624.3,334 625.3,369" stroke="#ff4000"/>
<polyline points="624.8,386 623.9,390.7 622.4,394.3 620.3,397.2 617.8,399.4 615,401.2 611.8,402.7 608.6,404.3 605.2,406" stroke="#ff4000"/>
<polyline points="605.2,406 605.2,539 699.4,539" stroke="#ff4000"/>
<polyline points="647.3,327 648.7,333.1 650.8,339 653.6,344.6 657.1,349.9 661,354.7 665.5,359.1 670.4,362.9 675.7,366.2 681.3,368.9 687.2,370.8 693.2,372 699.4,372.4" stroke="#ffff00"/>
<polyline points="648,327 649.4,333.1 651.5,339 654.3,344.6 657.6,349.9 661.6,354.7 666,359 670.8,362.9 676,366.1 681.6,368.7 687.3,370.7 693.3,371.9 699.4,372.3" stroke="#ff8000"/>
<polyline points="648.7,327 650.1,333.1 652.2,339 654.9,344.6 658.2,349.8 662.1,354.6 666.4,358.9 671.2,362.8 676.3,366 681.8,368.6 687.5,370.5 693.4,371.7 699.4,372.1" stroke="#3838ff"/>
<polyline points="650.1,327 651.5,333.1 653.5,339 656.2,344.6 659.4,349.7 663.1,354.5 667.4,358.8 672,362.6 677,365.8 682.3,368.4 687.8,370.3 693.5,371.4 699.4,371.9" stroke="#00ff00"/>
<polyline points="650.8,327 652.1,333.1 654.2,339 656.8,344.5 660,349.7 663.7,354.4 667.8,358.7 672.4,362.5 677.3,365.7 682.5,368.2 688,370.1 693.6,371.3 699.4,371.7" stroke="#ff4000"/>
<polyline points="649.4,327 650.8,333.1 652.8,339 655.5,344.6 658.8,349.8 662.6,354.6 666.9,358.9 671.6,362.7 676.7,365.9 682,368.5 687.6,370.4 693.5,371.6 699.4,372" stroke="#ffffff"/>
<polyline points="641.4,324 666.6,318.5" stroke="#ffffff" stroke-dasharray="3 2"/>
<polyline points="666.6,318.5 671.9,325" stroke="#ffffff"/>
<polyline points="649.4,326.5 665.9,320.5" stroke="#ffff00"/>
<polyline points="798.2,333.1 793.9,372" stroke="#ffff00" stroke-dasharray="3 2"/>
<polyline points="793.9,386 794.8,391.8 796.4,397.2 798.5,402.3 801.2,407 804.3,411.2 807.9,415.1 811.8,418.6 816.1,421.7" stroke="#ffff00" stroke-dasharray="3 2"/>
<polyline points="816.1,421.7 816.1,561.5 699.4,561.5" stroke="#ffff00" stroke-dasharray="3 2"/>
<polyline points="792.8,334 749.4,327.7" stroke="#ffff00"/>
<polyline points="792.8,334 790.5,369" stroke="#ffff00"/>
<polyline points="791,386 792,391.3 793.7,396.8 796,402.1 798.7,407.2 801.9,411.9 805.2,416 808.7,419.3 812.1,421.7" stroke="#ffff00"/>
<polyline points="812.1,421.7 812.1,557 699.4,557" stroke="#ffff00"/>
<polyline points="789.4,334 749.4,327.3" stroke="#ff8000"/>
<polyline points="789.4,334 787.4,369" stroke="#ff8000"/>
<polyline points="787.9,386 788.8,391.2 790.4,396.4 792.6,401.3 795.2,405.9 798.2,410.1 801.4,413.7 804.8,416.7 808.2,419" stroke="#ff8000"/>
<polyline points="808.2,419 808.2,554.1 699.4,554.1" stroke="#ff8000"/>
<polyline points="785.8,334 749.4,326.9" stroke="#3838ff"/>
<polyline points="785.8,334 784.3,369" stroke="#3838ff"/>
<polyline points="784.8,386 785.7,391.1 787.3,395.9 789.5,400.3 792.1,404.4 795,408 798.3,411.2 801.6,413.8 805,416" stroke="#3838ff"/>
<polyline points="805,416 805,550.2 699.4,550.2" stroke="#3838ff"/>
<polyline points="782.8,334.5 749.4,326.5" stroke="#ffffff"/>
<polyline points="782.8,334 781.2,369" stroke="#ffffff"/>
<polyline points="781.7,386 782.6,390.9 784.2,395.3 786.3,399.2 788.8,402.6 791.7,405.5 794.9,408.1 798.2,410.4 801.6,412.4" stroke="#ffffff"/>
<polyline points="801.6,412.4 801.6,546.5 699.4,546.5" stroke="#ffffff"/>
<polyline points="778.1,334.5 749.4,326.1" stroke="#00ff00"/>
<polyline points="778.1,334 776.6,369" stroke="#00ff00"/>
<polyline points="777.1,386 778,390.8 779.7,394.8 781.9,398.1 784.5,400.9 787.6,403.2 790.8,405.3 794.2,407.2 797.6,409" stroke="#00ff00"/>
<polyline points="797.6,409 797.6,542.2 699.4,542.2" stroke="#00ff00"/>
<polyline points="774.5,334.5 749.4,325.7" stroke="#ff4000"/>
<polyline points="774.5,334 773.5,369" stroke="#ff4000"/>
<polyline points="774,386 774.9,390.7 776.4,394.3 778.5,397.2 781,399.4 783.8,401.2 787,402.7 790.2,404.3 793.6,406" stroke="#ff4000"/>
<polyline points="793.6,406 793.6,539 699.4,539" stroke="#ff4000"/>
<polyline points="751.5,327 750.1,333.1 748,339 745.2,344.6 741.7,349.9 737.8,354.7 733.3,359.1 728.4,362.9 723.1,366.2 717.5,368.9 711.6,370.8 705.6,372 699.4,372.4" stroke="#ffff00"/>
<polyline points="750.8,327 749.4,333.1 747.3,339 744.5,344.6 741.2,349.9 737.2,354.7 732.8,359 728,362.9 722.8,366.1 717.2,368.7 711.5,370.7 705.5,371.9 699.4,372.3" stroke="#ff8000"/>
<polyline points="750.1,327 748.7,333.1 746.6,339 743.9,344.6 740.6,349.8 736.7,354.6 732.4,358.9 727.6,362.8 722.5,366 717,368.6 711.3,370.5 705.4,371.7 699.4,372.1" stroke="#3838ff"/>
<polyline points="748.7,327 747.3,333.1 745.3,339 742.6,344.6 739.4,349.7 735.7,354.5 731.4,358.8 726.8,362.6 721.8,365.8 716.5,368.4 711,370.3 705.3,371.4 699.4,371.9" stroke="#00ff00"/>
<polyline points="748,327 746.7,333.1 744.6,339 742,344.5 738.8,349.7 735.1,354.4 731,358.7 726.4,362.5 721.5,365.7 716.3,368.2 710.8,370.1 705.2,371.3 699.4,371.7" stroke="#ff4000"/>
<polyline points="749.4,327 748,333.1 746,339 743.3,344.6 740,349.8 736.2,354.6 731.9,358.9 727.2,362.7 722.1,365.9 716.8,368.5 711.2,370.4 705.3,371.6 699.4,372" stroke="#ffffff"/>
<polyline points="757.4,324 732.2,318.5" stroke="#ffffff" stroke-dasharray="3 2"/>
<polyline points="732.2,318.5 726.9,325" stroke="#ffffff"/>
<polyline points="749.4,326.5 732.9,320.5" stroke="#ffff00"/>
<polyline points="699.4,328 699.4,342.7" stroke="#ffffff"/>
<polyline points="699.4,354 699.4,367" stroke="#ffffff"/>
<polyline points="693.4,329 705.4,329" stroke="#ffffff" stroke-dasharray="3 1"/>
<polyline points="699.4,372 699.4,510" stroke="#ffffff"/>
<polyline points="699.4,520.5 699.4,535" stroke="#ffffff"/>
<polyline points="699.4,380 695.9,372.5" stroke="#ffffc0"/>
<polyline points="456.4,574.5 800.2,574.5" stroke="#ffff00"/>
<polyline points="449.2,574.5 807.5,574.5" stroke="#ffffff" stroke-dasharray="3 3"/>
<polyline points="456.4,636.5 800.2,636.5" stroke="#ffff00"/>
<polyline points="449.2,636.5 807.5,636.5" stroke="#ffffff" stroke-dasharray="3 3"/>
<polyline points="454.3,579.5 803.5,579.5" stroke="#ffffff"/>
<polyline points="454.3,632.5 803.5,632.5" stroke="#ffffff"/>
<polyline points="454.3,579.5 476,579.5" stroke="#ffff00"/>
<polyline points="454.3,632.5 476,632.5" stroke="#ffff00"/>
<polyline points="781,579.5 803.5,579.5" stroke="#ffff00"/>
<polyline points="781,632.5 803.5,632.5" stroke="#ffff00"/>
<polyline points="449.2,574.5 449.2,636.5" stroke="#ffff00" stroke-dasharray="3 2"/>
<polyline points="454.3,579.5 454.3,632.5" stroke="#ffff00"/>
<polyline points="807.5,574.5 807.5,636.5" stroke="#ffff00" stroke-dasharray="3 2"/>
<polyline points="803.5,579.5 803.5,632.5" stroke="#ffff00"/>
<polyline points="456.4,574.5 456.4,636.5" stroke="#ff8000" stroke-dasharray="3 2"/>
<polyline points="461.4,579.5 461.4,632.5" stroke="#ff8000"/>
<polyline points="800.2,574.5 800.2,636.5" stroke="#ff8000" stroke-dasharray="3 2"/>
<polyline points="795.7,579.5 795.7,632.5" stroke="#ff8000"/>
<polyline points="464.1,574.5 464.1,636.5" stroke="#3838ff" stroke-dasharray="3 2"/>
<polyline points="469.2,579.5 469.2,632.5" stroke="#3838ff"/>
<polyline points="792.7,574.5 792.7,636.5" stroke="#3838ff" stroke-dasharray="3 2"/>
<polyline points="788,579.5 788,632.5" stroke="#3838ff"/>
<polyline points="471.2,574.5 471.2,636.5" stroke="#ffffff" stroke-dasharray="3 2"/>
<polyline points="476.3,579.5 476.3,632.5" stroke="#ffffff"/>
<polyline points="785.6,574.5 785.6,636.5" stroke="#ffffff" stroke-dasharray="3 2"/>
<polyline points="780.5,579.5 780.5,632.5" stroke="#ffffff"/>
<polyline points="479.4,574.5 479.4,636.5" stroke="#00ff00" stroke-dasharray="3 2"/>
<polyline points="484.4,579.5 484.4,632.5" stroke="#00ff00"/>
<polyline points="777.4,574.5 777.4,636.5" stroke="#00ff00" stroke-dasharray="3 2"/>
<polyline points="773.4,579.5 773.4,632.5" stroke="#00ff00"/>
<polyline points="487.3,574.5 487.3,636.5" stroke="#ff4000" stroke-dasharray="3 2"/>
<polyline points="491.6,579.5 491.6,632.5" stroke="#ff4000"/>
<polyline points="770.3,574.5 770.3,636.5" stroke="#ff4000" stroke-dasharray="3 2"/>
<polyline points="765.2,579.5 765.2,632.5" stroke="#ff4000"/>
<polyline points="529,575.5 529,637.5" stroke="#ffffff"/>
<polyline points="529,575.5 526,579.5" stroke="#ffffc0"/>
</g>
<g class="tx">
<text x="307.5" y="83.9" text-anchor="middle">PB228</text>
<text x="309.8" y="94" text-anchor="middle">BAN LEGING</text>
<text x="305" y="104.1" text-anchor="middle">X1</text>
<text x="308.7" y="114.2" text-anchor="middle">M,L,XL,XXL,3XL,4XL</text>
<text x="305" y="124.3" text-anchor="middle">3D-Front</text>
<text transform="translate(94.8 393.8) rotate(-90)">PB228</text>
<text transform="translate(104.5 413) rotate(-90)">DEPAN LEGING</text>
<text transform="translate(115.8 385.5) rotate(-90)">X2</text>
<text transform="translate(126.2 429.5) rotate(-90)">M,L,XL,XXL,3XL,4XL</text>
<text transform="translate(136.2 402) rotate(-90)">3D-Front</text>
<text transform="translate(217.1 338.2) rotate(-90)">PB228</text>
<text transform="translate(226.8 365.8) rotate(-90)">BELAKANG LEGING</text>
<text transform="translate(237 330) rotate(-90)">X2</text>
<text transform="translate(247.6 374) rotate(-90)">M,L,XL,XXL,3XL,4XL</text>
<text transform="translate(257.1 346.5) rotate(-90)">3D-Front</text>
<text transform="translate(208.8 625.2) rotate(-90)">PB228</text>
<text transform="translate(218.8 639) rotate(-90)">ROK LEGING</text>
<text transform="translate(229.1 617) rotate(-90)">X2</text>
<text transform="translate(239.8 661) rotate(-90)">M,L,XL,XXL,3XL,4XL</text>
<text transform="translate(249.5 633.5) rotate(-90)">3D-Front</text>
<text transform="translate(389.3 245.2) rotate(-90)">PB228</text>
<text transform="translate(398.8 270) rotate(-90)">KANTONG LEGING</text>
<text transform="translate(408.9 237) rotate(-90)">X1</text>
<text transform="translate(419 281) rotate(-90)">M,L,XL,XXL,3XL,4XL</text>
<text transform="translate(429.1 253.5) rotate(-90)">3D-Front</text>
<text transform="translate(358 339.8) rotate(90)">PB228</text>
<text transform="translate(348.9 317.8) rotate(90)">KANTONG JAKET</text>
<text transform="translate(338.9 348) rotate(90)">X2</text>
<text transform="translate(328.4 304) rotate(90)">M,L,XL,XXL,3XL,4XL</text>
<text transform="translate(318.6 331.5) rotate(90)">3D-Front</text>
<text x="438.5" y="322.5">2</text>
<text x="452.5" y="526">2</text>
<text x="388" y="451" style="font-size:9px">1</text>
<text transform="translate(422.3 430.9) rotate(-90)">PB228</text>
<text transform="translate(432.3 447.4) rotate(-90)">DEPAN JAKET</text>
<text transform="translate(443 422.7) rotate(-90)">X2</text>
<text transform="translate(452.8 466.7) rotate(-90)">M,L,XL,XXL,3XL,4XL</text>
<text transform="translate(462.8 439.2) rotate(-90)">3D-Front</text>
<text transform="translate(514 450.8) rotate(-90)">PB228</text>
<text transform="translate(524.5 464.5) rotate(-90)">MIKA JAKET</text>
<text transform="translate(534.8 442.5) rotate(-90)">X1</text>
<text transform="translate(545.3 486.5) rotate(-90)">M,L,XL,XXL,3XL,4XL</text>
<text transform="translate(554.3 459) rotate(-90)">3D-Front</text>
<text transform="translate(585.4 124.8) rotate(90)">PB228</text>
<text transform="translate(575.8 103.6) rotate(90)" style="white-space:pre">T   .MOON JKT</text>
<text transform="translate(565 133.5) rotate(90)">X1</text>
<text transform="translate(554.4 89.7) rotate(90)">M,L,XL,XXL,3XL,4XL</text>
<text transform="translate(544.9 117.5) rotate(90)">3D-Front</text>
<text x="530" y="178">2</text>
<text x="534.5" y="312.5">1</text>
<text transform="translate(548.8 238.4) rotate(-90)">PB228</text>
<text transform="translate(558.7 252.2) rotate(-90)">TOPI JAKET</text>
<text transform="translate(568.4 230.2) rotate(-90)">X2</text>
<text transform="translate(578.5 274.2) rotate(-90)">M,L,XL,XXL,3XL,4XL</text>
<text transform="translate(588.2 246.7) rotate(-90)">3D-Front</text>
<text transform="translate(735.8 170.1) rotate(90)">PB228</text>
<text transform="translate(726.1 137.1) rotate(90)">badan belakang x1</text>
<text transform="translate(715.9 178.3) rotate(90)">X2</text>
<text transform="translate(705.7 134.3) rotate(90)">M,L,XL,XXL,3XL,4XL</text>
<text transform="translate(696 161.8) rotate(90)">3D-Front</text>
<text x="748" y="321">3</text>
<text x="700.5" y="383.5">2</text>
<text x="644" y="338">1</text>
<text transform="translate(677.8 457.1) rotate(-90)">PB228</text>
<text transform="translate(687.6 498.3) rotate(-90)">BADAN BELAKANG JAKET</text>
<text transform="translate(698.1 448.8) rotate(-90)">X1</text>
<text transform="translate(707.9 492.8) rotate(-90)">M,L,XL,XXL,3XL,4XL</text>
<text transform="translate(718.8 465.3) rotate(-90)">3D-Front</text>
<text transform="translate(508 615) rotate(-90)">PB228</text>
<text transform="translate(518.1 639.7) rotate(-90)">BAN RIBB JAKET</text>
<text transform="translate(528.3 606.7) rotate(-90)">X1</text>
<text transform="translate(538.5 650.7) rotate(-90)">M,L,XL,XXL,3XL,4XL</text>
<text transform="translate(548.3 623.2) rotate(-90)">3D-Front</text>
</g>
<g class="lb">
<rect x="210.7" y="89.2" width="28.7" height="11" fill="#000"/>
<text x="225" y="98.6" text-anchor="middle">42.51</text>
<rect x="369.7" y="89.2" width="28.7" height="11" fill="#000"/>
<text x="384" y="98.6" text-anchor="middle">42.51</text>
<rect x="210.7" y="110.9" width="28.7" height="11" fill="#000"/>
<text x="225" y="120.3" text-anchor="middle">42.51</text>
<rect x="369.7" y="110.9" width="28.7" height="11" fill="#000"/>
<text x="384" y="120.3" text-anchor="middle">42.51</text>
<rect x="141.6" y="95.8" width="8" height="7" fill="#000"/>
<text transform="translate(149.5 102.3) rotate(-90)">3</text>
<rect x="141.6" y="107.2" width="8" height="7" fill="#000"/>
<text transform="translate(149.5 113.7) rotate(-90)">3</text>
<rect x="460.3" y="95.8" width="8" height="7" fill="#000"/>
<text transform="translate(468.2 102.3) rotate(-90)">3</text>
<rect x="460.3" y="107.2" width="8" height="7" fill="#000"/>
<text transform="translate(468.2 113.7) rotate(-90)">3</text>
<rect x="105.7" y="137" width="28.7" height="11" fill="#000"/>
<text x="120" y="146.4" text-anchor="middle">21.76</text>
<rect x="149" y="142.1" width="20.8" height="11" fill="#000"/>
<text x="159.4" y="151.5" text-anchor="middle">2.51</text>
<rect x="145.7" y="174" width="28.7" height="11" fill="#000"/>
<text x="160" y="183.4" text-anchor="middle">14.34</text>
<rect x="61.2" y="189.5" width="28.7" height="11" fill="#000"/>
<text x="75.5" y="198.9" text-anchor="middle">27.58</text>
<rect x="66.3" y="361.2" width="28.7" height="11" fill="#000"/>
<text x="80.6" y="370.6" text-anchor="middle">67.24</text>
<rect x="136.7" y="342.5" width="28.7" height="11" fill="#000"/>
<text x="151" y="351.9" text-anchor="middle">76.25</text>
<rect x="103.3" y="486.2" width="28.7" height="11" fill="#000"/>
<text x="117.6" y="495.6" text-anchor="middle">14.48</text>
<rect x="238.5" y="144.2" width="28.7" height="11" fill="#000"/>
<text x="252.8" y="153.6" text-anchor="middle">20.75</text>
<rect x="190.4" y="198.8" width="28.7" height="11" fill="#000"/>
<text x="204.7" y="208.2" text-anchor="middle">31.79</text>
<rect x="192.1" y="370.5" width="22.8" height="11" fill="#000"/>
<text x="203.5" y="379.9" text-anchor="middle">67.3</text>
<rect x="264.2" y="323.2" width="28.7" height="11" fill="#000"/>
<text x="278.5" y="332.6" text-anchor="middle">93.14</text>
<rect x="229.5" y="497" width="28.7" height="11" fill="#000"/>
<text x="243.8" y="506.4" text-anchor="middle">15.65</text>
<rect x="106.9" y="540.7" width="22.8" height="11" fill="#000"/>
<text x="118.3" y="550.1" text-anchor="middle">35.1</text>
<rect x="329.9" y="538.6" width="22.8" height="11" fill="#000"/>
<text x="341.3" y="548" text-anchor="middle">35.1</text>
<rect x="185.6" y="536.6" width="26.7" height="11" fill="#000"/>
<text x="198.9" y="546" text-anchor="middle">17.52</text>
<rect x="248.7" y="536.6" width="26.7" height="11" fill="#000"/>
<text x="262" y="546" text-anchor="middle">17.52</text>
<rect x="114.4" y="650.1" width="26.7" height="11" fill="#000"/>
<text x="127.7" y="659.5" text-anchor="middle">56.81</text>
<rect x="319.9" y="647.3" width="26.7" height="11" fill="#000"/>
<text x="333.2" y="656.7" text-anchor="middle">56.81</text>
<rect x="370.4" y="183.4" width="28.7" height="11" fill="#000"/>
<text x="384.7" y="192.8" text-anchor="middle">13.91</text>
<rect x="348" y="187.5" width="20.8" height="11" fill="#000"/>
<text x="358.4" y="196.9" text-anchor="middle">2.51</text>
<rect x="343.6" y="219.1" width="28.7" height="11" fill="#000"/>
<text x="357.9" y="228.5" text-anchor="middle">14.34</text>
<rect x="348.5" y="260.5" width="22.8" height="11" fill="#000"/>
<text x="359.9" y="269.9" text-anchor="middle">7.84</text>
<rect x="374" y="275" width="22.8" height="11" fill="#000"/>
<text x="385.4" y="284.4" text-anchor="middle">13.2</text>
<rect x="421.8" y="183.4" width="28.7" height="11" fill="#000"/>
<text x="436.1" y="192.8" text-anchor="middle">13.91</text>
<rect x="452" y="187.5" width="20.8" height="11" fill="#000"/>
<text x="462.4" y="196.9" text-anchor="middle">2.51</text>
<rect x="448.6" y="219.1" width="28.7" height="11" fill="#000"/>
<text x="462.9" y="228.5" text-anchor="middle">14.34</text>
<rect x="449.5" y="260.5" width="22.8" height="11" fill="#000"/>
<text x="460.9" y="269.9" text-anchor="middle">7.84</text>
<rect x="424" y="275" width="22.8" height="11" fill="#000"/>
<text x="435.4" y="284.4" text-anchor="middle">13.2</text>
<rect x="360.7" y="322.8" width="13.9" height="11" fill="#000"/>
<text x="367.6" y="332.2" text-anchor="middle">14</text>
<rect x="355.9" y="364" width="22.8" height="11" fill="#000"/>
<text x="367.3" y="373.4" text-anchor="middle">7.85</text>
<rect x="323.9" y="379.1" width="28.7" height="11" fill="#000"/>
<text x="338.2" y="388.5" text-anchor="middle">16.05</text>
<rect x="311.2" y="328.2" width="26.7" height="11" fill="#000"/>
<text x="324.5" y="337.6" text-anchor="middle">28.86</text>
<rect x="422.7" y="308" width="26.7" height="11" fill="#000"/>
<text x="436" y="317.4" text-anchor="middle">13.49</text>
<rect x="402.5" y="359.3" width="28.7" height="11" fill="#000"/>
<text x="416.8" y="368.7" text-anchor="middle">24.25</text>
<rect x="459.1" y="324.1" width="26.7" height="11" fill="#000"/>
<text x="472.4" y="333.5" text-anchor="middle">13.78</text>
<rect x="378.7" y="418.8" width="28.7" height="11" fill="#000"/>
<text x="393" y="428.2" text-anchor="middle">13.29</text>
<rect x="385.6" y="469.8" width="13.9" height="11" fill="#000"/>
<text x="392.5" y="479.2" text-anchor="middle">14</text>
<rect x="381.1" y="510.7" width="22.8" height="11" fill="#000"/>
<text x="392.5" y="520.1" text-anchor="middle">7.85</text>
<rect x="408.4" y="525.3" width="28.7" height="11" fill="#000"/>
<text x="422.7" y="534.7" text-anchor="middle">16.05</text>
<rect x="443.1" y="525.3" width="20.8" height="11" fill="#000"/>
<text x="453.5" y="534.7" text-anchor="middle">2.95</text>
<rect x="474" y="525.3" width="7.9" height="11" fill="#000"/>
<text x="478" y="534.7" text-anchor="middle">8</text>
<rect x="482.1" y="431.1" width="22.8" height="11" fill="#000"/>
<text x="493.5" y="440.5" text-anchor="middle">50.5</text>
<rect x="509.7" y="316.2" width="20.8" height="11" fill="#000"/>
<text x="520.1" y="325.6" text-anchor="middle">4.39</text>
<rect x="526.7" y="336.9" width="26.7" height="11" fill="#000"/>
<text x="540" y="346.3" text-anchor="middle">13.78</text>
<rect x="516.1" y="428.2" width="28.7" height="11" fill="#000"/>
<text x="530.4" y="437.6" text-anchor="middle">59.48</text>
<rect x="549.2" y="445.2" width="22.8" height="11" fill="#000"/>
<text x="560.6" y="454.6" text-anchor="middle">50.5</text>
<rect x="540.9" y="540" width="7.9" height="11" fill="#000"/>
<text x="544.9" y="549.4" text-anchor="middle">8</text>
<rect x="512.4" y="102.7" width="20.8" height="11" fill="#000"/>
<text x="522.8" y="112.1" text-anchor="middle">4.35</text>
<rect x="535.2" y="110" width="20.8" height="11" fill="#000"/>
<text x="545.6" y="119.4" text-anchor="middle">9.79</text>
<rect x="518.3" y="137.8" width="26.7" height="11" fill="#000"/>
<text x="531.6" y="147.2" text-anchor="middle">19.62</text>
<rect x="595.6" y="102.7" width="20.8" height="11" fill="#000"/>
<text x="606" y="112.1" text-anchor="middle">4.35</text>
<rect x="572.8" y="110" width="20.8" height="11" fill="#000"/>
<text x="583.2" y="119.4" text-anchor="middle">9.79</text>
<rect x="583.9" y="137.8" width="26.7" height="11" fill="#000"/>
<text x="597.2" y="147.2" text-anchor="middle">19.62</text>
<rect x="511.9" y="236.3" width="28.7" height="11" fill="#000"/>
<text x="526.2" y="245.7" text-anchor="middle">31.19</text>
<rect x="581.5" y="199.1" width="28.7" height="11" fill="#000"/>
<text x="595.8" y="208.5" text-anchor="middle">43.05</text>
<rect x="557.8" y="284.8" width="28.7" height="11" fill="#000"/>
<text x="572.1" y="294.2" text-anchor="middle">21.07</text>
<rect x="519.1" y="177.5" width="22.8" height="11" fill="#000"/>
<text x="530.5" y="186.9" text-anchor="middle">2.58</text>
<rect x="523.1" y="294.7" width="14.8" height="11" fill="#000"/>
<text x="530.5" y="304.1" text-anchor="middle">2.6</text>
<rect x="660.3" y="82.1" width="28.7" height="11" fill="#000"/>
<text x="674.6" y="91.5" text-anchor="middle">24.11</text>
<rect x="635" y="194.8" width="22.8" height="11" fill="#000"/>
<text x="646.4" y="204.2" text-anchor="middle">47.4</text>
<rect x="669.8" y="284.4" width="28.7" height="11" fill="#000"/>
<text x="684.1" y="293.8" text-anchor="middle">17.06</text>
<rect x="742.3" y="82.1" width="28.7" height="11" fill="#000"/>
<text x="756.6" y="91.5" text-anchor="middle">24.11</text>
<rect x="773.4" y="194.8" width="22.8" height="11" fill="#000"/>
<text x="784.8" y="204.2" text-anchor="middle">47.4</text>
<rect x="732.8" y="284.4" width="28.7" height="11" fill="#000"/>
<text x="747.1" y="293.8" text-anchor="middle">17.06</text>
<rect x="627.3" y="323.1" width="26.7" height="11" fill="#000"/>
<text x="640.6" y="332.5" text-anchor="middle">13.49</text>
<rect x="670.2" y="324.9" width="20.8" height="11" fill="#000"/>
<text x="680.6" y="334.3" text-anchor="middle">9.79</text>
<rect x="608.3" y="373.1" width="22.8" height="11" fill="#000"/>
<text x="619.7" y="382.5" text-anchor="middle">23.4</text>
<rect x="583.9" y="475.3" width="28.7" height="11" fill="#000"/>
<text x="598.2" y="484.7" text-anchor="middle">35.14</text>
<rect x="641.5" y="541.5" width="13.9" height="11" fill="#000"/>
<text x="648.4" y="550.9" text-anchor="middle">27</text>
<rect x="744.9" y="323.1" width="26.7" height="11" fill="#000"/>
<text x="758.2" y="332.5" text-anchor="middle">13.49</text>
<rect x="707.8" y="324.9" width="20.8" height="11" fill="#000"/>
<text x="718.2" y="334.3" text-anchor="middle">9.79</text>
<rect x="767.7" y="373.1" width="22.8" height="11" fill="#000"/>
<text x="779.1" y="382.5" text-anchor="middle">23.4</text>
<rect x="786.3" y="475.3" width="28.7" height="11" fill="#000"/>
<text x="800.6" y="484.7" text-anchor="middle">35.14</text>
<rect x="743.5" y="541.5" width="13.9" height="11" fill="#000"/>
<text x="750.4" y="550.9" text-anchor="middle">27</text>
<rect x="469.8" y="599.8" width="13.9" height="11" fill="#000"/>
<text x="476.7" y="609.2" text-anchor="middle">14</text>
<rect x="773.6" y="599.8" width="13.9" height="11" fill="#000"/>
<text x="780.5" y="609.2" text-anchor="middle">14</text>
<rect x="620.4" y="574" width="13.9" height="11" fill="#000"/>
<text x="627.3" y="583.4" text-anchor="middle">81</text>
<rect x="620.4" y="627" width="13.9" height="11" fill="#000"/>
<text x="627.3" y="636.4" text-anchor="middle">81</text>
</g>
<g class="dt">
<circle cx="141.5" cy="90.3" r="2.8" fill="#ffffff"/>
<circle cx="468.5" cy="90.3" r="2.8" fill="#ffffff"/>
<circle cx="475.7" cy="90.3" r="2.8" fill="#ffff00"/>
<circle cx="141.5" cy="120.3" r="2.8" fill="#ffffff"/>
<circle cx="468.5" cy="120.3" r="2.8" fill="#ffffff"/>
<circle cx="475.7" cy="120.3" r="2.8" fill="#ffff00"/>
<circle cx="475.7" cy="105.2" r="2.8" fill="#ffff00"/>
<circle cx="140.5" cy="105.2" r="2.2" fill="#ffffff"/>
<circle cx="471.7" cy="94.7" r="2.8" fill="#ffff00"/>
<circle cx="471.7" cy="105.2" r="2.8" fill="#ffff00"/>
<circle cx="471.7" cy="116.3" r="2.8" fill="#ffff00"/>
<circle cx="145.6" cy="94.7" r="1.9" fill="#000" stroke="#ffffff" stroke-width="1.2"/>
<circle cx="464.3" cy="94.7" r="1.9" fill="#000" stroke="#ffffff" stroke-width="1.2"/>
<circle cx="145.6" cy="105.2" r="1.9" fill="#000" stroke="#ffffff" stroke-width="1.2"/>
<circle cx="464.3" cy="105.2" r="1.9" fill="#000" stroke="#ffffff" stroke-width="1.2"/>
<circle cx="145.6" cy="116.3" r="1.9" fill="#000" stroke="#ffffff" stroke-width="1.2"/>
<circle cx="464.3" cy="116.3" r="1.9" fill="#000" stroke="#ffffff" stroke-width="1.2"/>
<circle cx="304" cy="94.5" r="2.4" fill="#ffffff"/>
<circle cx="304" cy="116.5" r="2.4" fill="#ffffff"/>
<circle cx="304" cy="90.5" r="1.6" fill="#ffffff"/>
<circle cx="304" cy="120.5" r="1.6" fill="#ffffff"/>
<circle cx="74.2" cy="139" r="2.8" fill="#ffffff"/>
<circle cx="78.5" cy="142.5" r="2.4" fill="#ffffff"/>
<circle cx="159.6" cy="142.8" r="1.9" fill="#000" stroke="#ffffff" stroke-width="1.2"/>
<circle cx="159.6" cy="152.6" r="1.9" fill="#000" stroke="#ffffff" stroke-width="1.2"/>
<circle cx="167.2" cy="136" r="2.8" fill="#ffff00"/>
<circle cx="163.4" cy="139.6" r="2.4" fill="#ffff00"/>
<rect x="159" y="169" width="3" height="3" fill="#ffffff" shape-rendering="crispEdges"/>
<rect x="163" y="169" width="3" height="3" fill="#ffff00" shape-rendering="crispEdges"/>
<rect x="166" y="165" width="3" height="3" fill="#ffff00" shape-rendering="crispEdges"/>
<rect x="163" y="186" width="3" height="3" fill="#ffff00" shape-rendering="crispEdges"/>
<circle cx="159.4" cy="206" r="2.6" fill="#ffffff"/>
<circle cx="163.6" cy="203.5" r="2.6" fill="#ffff00"/>
<circle cx="167.4" cy="203" r="2.4" fill="#ffff00"/>
<circle cx="59.4" cy="239.4" r="2.8" fill="#ffffff"/>
<circle cx="63.7" cy="241.8" r="2.4" fill="#ffffff"/>
<rect x="75" y="219" width="3" height="3" fill="#ffffff" shape-rendering="crispEdges"/>
<rect x="71" y="218" width="3" height="3" fill="#ffffff" shape-rendering="crispEdges"/>
<rect x="71" y="222" width="3" height="3" fill="#ffffff" shape-rendering="crispEdges"/>
<rect x="70" y="235" width="3" height="3" fill="#ffffff" shape-rendering="crispEdges"/>
<rect x="60" y="249" width="3" height="3" fill="#ffffff" shape-rendering="crispEdges"/>
<rect x="62" y="261" width="3" height="3" fill="#ffffff" shape-rendering="crispEdges"/><rect x="63" y="262" width="1" height="1" fill="#000" shape-rendering="crispEdges"/>
<rect x="63" y="273" width="2" height="2" fill="#ffffff" shape-rendering="crispEdges"/>
<rect x="65" y="285" width="3" height="3" fill="#ffffff" shape-rendering="crispEdges"/>
<rect x="66" y="297" width="3" height="3" fill="#ffffff" shape-rendering="crispEdges"/><rect x="67" y="298" width="1" height="1" fill="#000" shape-rendering="crispEdges"/>
<rect x="68" y="309" width="2" height="2" fill="#ffffff" shape-rendering="crispEdges"/>
<rect x="69" y="321" width="3" height="3" fill="#ffffff" shape-rendering="crispEdges"/>
<rect x="71" y="333" width="3" height="3" fill="#ffffff" shape-rendering="crispEdges"/><rect x="72" y="334" width="1" height="1" fill="#000" shape-rendering="crispEdges"/>
<rect x="72" y="345" width="2" height="2" fill="#ffffff" shape-rendering="crispEdges"/>
<rect x="74" y="357" width="3" height="3" fill="#ffffff" shape-rendering="crispEdges"/>
<rect x="76" y="381" width="2" height="2" fill="#ffffff" shape-rendering="crispEdges"/>
<rect x="67" y="266" width="2" height="2" fill="#ffffff" shape-rendering="crispEdges"/>
<rect x="69" y="283" width="3" height="3" fill="#ffffff" shape-rendering="crispEdges"/>
<rect x="71" y="301" width="2" height="2" fill="#ffffff" shape-rendering="crispEdges"/>
<rect x="73" y="318" width="3" height="3" fill="#ffffff" shape-rendering="crispEdges"/>
<rect x="75" y="335" width="2" height="2" fill="#ffffff" shape-rendering="crispEdges"/>
<rect x="77" y="353" width="3" height="3" fill="#ffffff" shape-rendering="crispEdges"/>
<rect x="69" y="270" width="3" height="3" fill="#ffffff" shape-rendering="crispEdges"/><rect x="70" y="271" width="1" height="1" fill="#000" shape-rendering="crispEdges"/>
<rect x="72" y="313" width="3" height="3" fill="#ffffff" shape-rendering="crispEdges"/><rect x="73" y="314" width="1" height="1" fill="#000" shape-rendering="crispEdges"/>
<rect x="74" y="326" width="3" height="3" fill="#ffffff" shape-rendering="crispEdges"/><rect x="75" y="327" width="1" height="1" fill="#000" shape-rendering="crispEdges"/>
<rect x="150" y="327" width="3" height="3" fill="#ffffff" shape-rendering="crispEdges"/>
<rect x="153" y="327" width="3" height="3" fill="#ffff00" shape-rendering="crispEdges"/>
<rect x="155" y="241" width="3" height="3" fill="#ffffff" shape-rendering="crispEdges"/>
<rect x="158" y="241" width="3" height="3" fill="#ffff00" shape-rendering="crispEdges"/>
<rect x="163" y="237" width="3" height="3" fill="#ffff00" shape-rendering="crispEdges"/>
<circle cx="91.9" cy="491.7" r="2.4" fill="#ffffff"/>
<circle cx="87.4" cy="499.4" r="2.4" fill="#ffffff"/>
<circle cx="145.2" cy="491.7" r="2.4" fill="#ffffff"/>
<circle cx="149.3" cy="495.6" r="2.6" fill="#ffff00"/>
<circle cx="152.6" cy="503.3" r="2.6" fill="#ffff00"/>
<circle cx="147.5" cy="499.4" r="1.6" fill="#ffffff"/>
<circle cx="210.9" cy="141.2" r="2.8" fill="#ffffff"/>
<circle cx="213.4" cy="145.2" r="2.4" fill="#ffffff"/>
<circle cx="290.7" cy="153.1" r="2.8" fill="#ffffff"/>
<circle cx="294.6" cy="149.7" r="2.6" fill="#ffff00"/>
<circle cx="298" cy="146.9" r="2.6" fill="#ffff00"/>
<circle cx="175.6" cy="250.7" r="2.8" fill="#ffffff"/>
<circle cx="180.6" cy="253.2" r="2.4" fill="#ffffff"/>
<rect x="197" y="224" width="3" height="3" fill="#ffffff" shape-rendering="crispEdges"/>
<rect x="201" y="224" width="3" height="3" fill="#ffffff" shape-rendering="crispEdges"/>
<rect x="186" y="247" width="3" height="3" fill="#ffffff" shape-rendering="crispEdges"/>
<rect x="194" y="245" width="3" height="3" fill="#ffffff" shape-rendering="crispEdges"/>
<circle cx="197.5" cy="231.4" r="1.8" fill="#ffffff"/>
<rect x="182" y="247" width="3" height="3" fill="#ffffff" shape-rendering="crispEdges"/><rect x="183" y="248" width="1" height="1" fill="#000" shape-rendering="crispEdges"/>
<rect x="176" y="260" width="3" height="3" fill="#ffffff" shape-rendering="crispEdges"/>
<rect x="179" y="272" width="3" height="3" fill="#ffffff" shape-rendering="crispEdges"/><rect x="180" y="273" width="1" height="1" fill="#000" shape-rendering="crispEdges"/>
<rect x="182" y="284" width="2" height="2" fill="#ffffff" shape-rendering="crispEdges"/>
<rect x="184" y="296" width="3" height="3" fill="#ffffff" shape-rendering="crispEdges"/>
<rect x="187" y="308" width="3" height="3" fill="#ffffff" shape-rendering="crispEdges"/><rect x="188" y="309" width="1" height="1" fill="#000" shape-rendering="crispEdges"/>
<rect x="189" y="320" width="2" height="2" fill="#ffffff" shape-rendering="crispEdges"/>
<rect x="191" y="332" width="3" height="3" fill="#ffffff" shape-rendering="crispEdges"/>
<rect x="192" y="344" width="3" height="3" fill="#ffffff" shape-rendering="crispEdges"/><rect x="193" y="345" width="1" height="1" fill="#000" shape-rendering="crispEdges"/>
<rect x="194" y="356" width="2" height="2" fill="#ffffff" shape-rendering="crispEdges"/>
<rect x="195" y="368" width="3" height="3" fill="#ffffff" shape-rendering="crispEdges"/>
<rect x="198" y="392" width="2" height="2" fill="#ffffff" shape-rendering="crispEdges"/>
<rect x="185" y="277" width="2" height="2" fill="#ffffff" shape-rendering="crispEdges"/>
<rect x="188" y="294" width="3" height="3" fill="#ffffff" shape-rendering="crispEdges"/>
<rect x="192" y="311" width="2" height="2" fill="#ffffff" shape-rendering="crispEdges"/>
<rect x="195" y="329" width="3" height="3" fill="#ffffff" shape-rendering="crispEdges"/>
<rect x="197" y="346" width="2" height="2" fill="#ffffff" shape-rendering="crispEdges"/>
<rect x="199" y="364" width="3" height="3" fill="#ffffff" shape-rendering="crispEdges"/>
<rect x="285" y="203" width="3" height="3" fill="#ffffff" shape-rendering="crispEdges"/>
<rect x="289" y="203" width="3" height="3" fill="#ffff00" shape-rendering="crispEdges"/>
<rect x="293" y="201" width="3" height="3" fill="#ffff00" shape-rendering="crispEdges"/>
<rect x="283" y="251" width="3" height="3" fill="#ffffff" shape-rendering="crispEdges"/>
<rect x="286" y="251" width="3" height="3" fill="#ffff00" shape-rendering="crispEdges"/>
<rect x="278" y="339" width="3" height="3" fill="#ffffff" shape-rendering="crispEdges"/>
<rect x="281" y="339" width="3" height="3" fill="#ffff00" shape-rendering="crispEdges"/>
<rect x="197" y="339" width="3" height="3" fill="#ffffff" shape-rendering="crispEdges"/>
<circle cx="213.3" cy="502.5" r="2.4" fill="#ffffff"/>
<circle cx="210.4" cy="510.8" r="2.4" fill="#ffffff"/>
<circle cx="272.6" cy="502.5" r="2.4" fill="#ffffff"/>
<circle cx="277" cy="506.4" r="2.6" fill="#ffff00"/>
<circle cx="278.5" cy="511.4" r="2.4" fill="#ffffff"/>
<circle cx="178.5" cy="513.2" r="2.6" fill="#ffffff"/>
<circle cx="177.5" cy="517.5" r="2.2" fill="#ffffff"/>
<circle cx="277" cy="509.5" r="2.8" fill="#ffff00"/>
<circle cx="281" cy="515.6" r="2.8" fill="#ffffff"/>
<circle cx="51.2" cy="576.3" r="2.8" fill="#ffffff"/>
<circle cx="59.5" cy="576.3" r="2.6" fill="#ffffff"/>
<circle cx="401.1" cy="572.6" r="2.6" fill="#ffffff"/>
<circle cx="409.3" cy="572.6" r="2.6" fill="#ffffff"/>
<circle cx="229.4" cy="548.2" r="2.4" fill="#ffffff"/>
<circle cx="229.4" cy="545" r="2" fill="#ffffff"/>
<circle cx="231.4" cy="681.3" r="2.6" fill="#ffffff"/>
<circle cx="231.4" cy="689.4" r="2.6" fill="#ffffff"/>
<rect x="395" y="583" width="3" height="3" fill="#ffffff" shape-rendering="crispEdges"/>
<rect x="388" y="594" width="3" height="3" fill="#ffffff" shape-rendering="crispEdges"/>
<rect x="380" y="604" width="3" height="3" fill="#ffffff" shape-rendering="crispEdges"/>
<rect x="372" y="614" width="3" height="3" fill="#ffffff" shape-rendering="crispEdges"/>
<rect x="364" y="624" width="3" height="3" fill="#ffffff" shape-rendering="crispEdges"/>
<rect x="354" y="632" width="3" height="3" fill="#ffffff" shape-rendering="crispEdges"/>
<rect x="344" y="641" width="3" height="3" fill="#ffffff" shape-rendering="crispEdges"/>
<rect x="311" y="661" width="3" height="3" fill="#ffffff" shape-rendering="crispEdges"/>
<rect x="300" y="666" width="3" height="3" fill="#ffffff" shape-rendering="crispEdges"/>
<rect x="288" y="671" width="3" height="3" fill="#ffffff" shape-rendering="crispEdges"/>
<rect x="275" y="674" width="3" height="3" fill="#ffffff" shape-rendering="crispEdges"/>
<rect x="263" y="677" width="3" height="3" fill="#ffffff" shape-rendering="crispEdges"/>
<rect x="250" y="679" width="3" height="3" fill="#ffffff" shape-rendering="crispEdges"/>
<rect x="237" y="680" width="3" height="3" fill="#ffffff" shape-rendering="crispEdges"/>
<rect x="224" y="680" width="3" height="3" fill="#ffffff" shape-rendering="crispEdges"/>
<rect x="211" y="679" width="3" height="3" fill="#ffffff" shape-rendering="crispEdges"/>
<rect x="198" y="677" width="3" height="3" fill="#ffffff" shape-rendering="crispEdges"/>
<rect x="186" y="675" width="3" height="3" fill="#ffffff" shape-rendering="crispEdges"/>
<rect x="173" y="672" width="3" height="3" fill="#ffffff" shape-rendering="crispEdges"/>
<rect x="161" y="668" width="3" height="3" fill="#ffffff" shape-rendering="crispEdges"/>
<rect x="149" y="663" width="3" height="3" fill="#ffffff" shape-rendering="crispEdges"/>
<rect x="116" y="643" width="3" height="3" fill="#ffffff" shape-rendering="crispEdges"/>
<rect x="106" y="635" width="3" height="3" fill="#ffffff" shape-rendering="crispEdges"/>
<rect x="96" y="626" width="3" height="3" fill="#ffffff" shape-rendering="crispEdges"/>
<rect x="87" y="617" width="3" height="3" fill="#ffffff" shape-rendering="crispEdges"/>
<rect x="79" y="607" width="3" height="3" fill="#ffffff" shape-rendering="crispEdges"/>
<rect x="71" y="597" width="3" height="3" fill="#ffffff" shape-rendering="crispEdges"/>
<rect x="65" y="586" width="3" height="3" fill="#ffffff" shape-rendering="crispEdges"/>
<rect x="405" y="581" width="3" height="3" fill="#ffffff" shape-rendering="crispEdges"/><rect x="406" y="582" width="1" height="1" fill="#000" shape-rendering="crispEdges"/>
<rect x="402" y="587" width="3" height="3" fill="#ffffff" shape-rendering="crispEdges"/>
<rect x="398" y="593" width="2" height="2" fill="#ffffff" shape-rendering="crispEdges"/>
<rect x="395" y="598" width="3" height="3" fill="#ffffff" shape-rendering="crispEdges"/><rect x="396" y="599" width="1" height="1" fill="#000" shape-rendering="crispEdges"/>
<rect x="391" y="604" width="3" height="3" fill="#ffffff" shape-rendering="crispEdges"/>
<rect x="387" y="610" width="2" height="2" fill="#ffffff" shape-rendering="crispEdges"/>
<rect x="383" y="615" width="3" height="3" fill="#ffffff" shape-rendering="crispEdges"/><rect x="384" y="616" width="1" height="1" fill="#000" shape-rendering="crispEdges"/>
<rect x="378" y="620" width="3" height="3" fill="#ffffff" shape-rendering="crispEdges"/>
<rect x="374" y="625" width="2" height="2" fill="#ffffff" shape-rendering="crispEdges"/>
<rect x="369" y="630" width="3" height="3" fill="#ffffff" shape-rendering="crispEdges"/><rect x="370" y="631" width="1" height="1" fill="#000" shape-rendering="crispEdges"/>
<rect x="364" y="635" width="3" height="3" fill="#ffffff" shape-rendering="crispEdges"/>
<rect x="359" y="640" width="2" height="2" fill="#ffffff" shape-rendering="crispEdges"/>
<rect x="354" y="644" width="3" height="3" fill="#ffffff" shape-rendering="crispEdges"/><rect x="355" y="645" width="1" height="1" fill="#000" shape-rendering="crispEdges"/>
<rect x="348" y="648" width="3" height="3" fill="#ffffff" shape-rendering="crispEdges"/>
<rect x="331" y="660" width="3" height="3" fill="#ffffff" shape-rendering="crispEdges"/>
<rect x="325" y="663" width="2" height="2" fill="#ffffff" shape-rendering="crispEdges"/>
<rect x="319" y="667" width="3" height="3" fill="#ffffff" shape-rendering="crispEdges"/><rect x="320" y="668" width="1" height="1" fill="#000" shape-rendering="crispEdges"/>
<rect x="313" y="670" width="3" height="3" fill="#ffffff" shape-rendering="crispEdges"/>
<rect x="307" y="673" width="2" height="2" fill="#ffffff" shape-rendering="crispEdges"/>
<rect x="300" y="675" width="3" height="3" fill="#ffffff" shape-rendering="crispEdges"/><rect x="301" y="676" width="1" height="1" fill="#000" shape-rendering="crispEdges"/>
<rect x="294" y="678" width="3" height="3" fill="#ffffff" shape-rendering="crispEdges"/>
<rect x="287" y="680" width="2" height="2" fill="#ffffff" shape-rendering="crispEdges"/>
<rect x="281" y="682" width="3" height="3" fill="#ffffff" shape-rendering="crispEdges"/><rect x="282" y="683" width="1" height="1" fill="#000" shape-rendering="crispEdges"/>
<rect x="274" y="683" width="3" height="3" fill="#ffffff" shape-rendering="crispEdges"/>
<rect x="267" y="685" width="2" height="2" fill="#ffffff" shape-rendering="crispEdges"/>
<rect x="261" y="686" width="3" height="3" fill="#ffffff" shape-rendering="crispEdges"/><rect x="262" y="687" width="1" height="1" fill="#000" shape-rendering="crispEdges"/>
<rect x="254" y="687" width="3" height="3" fill="#ffffff" shape-rendering="crispEdges"/>
<rect x="247" y="688" width="2" height="2" fill="#ffffff" shape-rendering="crispEdges"/>
<rect x="240" y="688" width="3" height="3" fill="#ffffff" shape-rendering="crispEdges"/><rect x="241" y="689" width="1" height="1" fill="#000" shape-rendering="crispEdges"/>
<rect x="233" y="689" width="3" height="3" fill="#ffffff" shape-rendering="crispEdges"/>
<rect x="226" y="689" width="2" height="2" fill="#ffffff" shape-rendering="crispEdges"/>
<rect x="220" y="688" width="3" height="3" fill="#ffffff" shape-rendering="crispEdges"/><rect x="221" y="689" width="1" height="1" fill="#000" shape-rendering="crispEdges"/>
<rect x="213" y="688" width="3" height="3" fill="#ffffff" shape-rendering="crispEdges"/>
<rect x="206" y="687" width="2" height="2" fill="#ffffff" shape-rendering="crispEdges"/>
<rect x="199" y="686" width="3" height="3" fill="#ffffff" shape-rendering="crispEdges"/><rect x="200" y="687" width="1" height="1" fill="#000" shape-rendering="crispEdges"/>
<rect x="192" y="685" width="3" height="3" fill="#ffffff" shape-rendering="crispEdges"/>
<rect x="186" y="684" width="2" height="2" fill="#ffffff" shape-rendering="crispEdges"/>
<rect x="179" y="682" width="3" height="3" fill="#ffffff" shape-rendering="crispEdges"/><rect x="180" y="683" width="1" height="1" fill="#000" shape-rendering="crispEdges"/>
<rect x="172" y="680" width="3" height="3" fill="#ffffff" shape-rendering="crispEdges"/>
<rect x="166" y="678" width="2" height="2" fill="#ffffff" shape-rendering="crispEdges"/>
<rect x="159" y="676" width="3" height="3" fill="#ffffff" shape-rendering="crispEdges"/><rect x="160" y="677" width="1" height="1" fill="#000" shape-rendering="crispEdges"/>
<rect x="153" y="674" width="3" height="3" fill="#ffffff" shape-rendering="crispEdges"/>
<rect x="147" y="671" width="2" height="2" fill="#ffffff" shape-rendering="crispEdges"/>
<rect x="140" y="668" width="3" height="3" fill="#ffffff" shape-rendering="crispEdges"/><rect x="141" y="669" width="1" height="1" fill="#000" shape-rendering="crispEdges"/>
<rect x="134" y="665" width="3" height="3" fill="#ffffff" shape-rendering="crispEdges"/>
<rect x="128" y="661" width="2" height="2" fill="#ffffff" shape-rendering="crispEdges"/>
<rect x="111" y="650" width="2" height="2" fill="#ffffff" shape-rendering="crispEdges"/>
<rect x="106" y="646" width="3" height="3" fill="#ffffff" shape-rendering="crispEdges"/><rect x="107" y="647" width="1" height="1" fill="#000" shape-rendering="crispEdges"/>
<rect x="100" y="642" width="3" height="3" fill="#ffffff" shape-rendering="crispEdges"/>
<rect x="95" y="637" width="2" height="2" fill="#ffffff" shape-rendering="crispEdges"/>
<rect x="90" y="632" width="3" height="3" fill="#ffffff" shape-rendering="crispEdges"/><rect x="91" y="633" width="1" height="1" fill="#000" shape-rendering="crispEdges"/>
<rect x="85" y="627" width="3" height="3" fill="#ffffff" shape-rendering="crispEdges"/>
<rect x="81" y="622" width="2" height="2" fill="#ffffff" shape-rendering="crispEdges"/>
<rect x="76" y="617" width="3" height="3" fill="#ffffff" shape-rendering="crispEdges"/><rect x="77" y="618" width="1" height="1" fill="#000" shape-rendering="crispEdges"/>
<rect x="72" y="612" width="3" height="3" fill="#ffffff" shape-rendering="crispEdges"/>
<rect x="68" y="606" width="2" height="2" fill="#ffffff" shape-rendering="crispEdges"/>
<rect x="64" y="601" width="3" height="3" fill="#ffffff" shape-rendering="crispEdges"/><rect x="65" y="602" width="1" height="1" fill="#000" shape-rendering="crispEdges"/>
<rect x="60" y="595" width="3" height="3" fill="#ffffff" shape-rendering="crispEdges"/>
<rect x="57" y="589" width="2" height="2" fill="#ffffff" shape-rendering="crispEdges"/>
<rect x="53" y="583" width="3" height="3" fill="#ffffff" shape-rendering="crispEdges"/><rect x="54" y="584" width="1" height="1" fill="#000" shape-rendering="crispEdges"/>
<rect x="279" y="517" width="3" height="3" fill="#ffffff" shape-rendering="crispEdges"/>
<rect x="277" y="521" width="3" height="3" fill="#ffffff" shape-rendering="crispEdges"/>
<rect x="274" y="525" width="3" height="3" fill="#ffffff" shape-rendering="crispEdges"/><rect x="275" y="526" width="1" height="1" fill="#000" shape-rendering="crispEdges"/>
<rect x="271" y="529" width="3" height="3" fill="#ffffff" shape-rendering="crispEdges"/>
<rect x="268" y="533" width="3" height="3" fill="#ffffff" shape-rendering="crispEdges"/>
<rect x="242" y="544" width="3" height="3" fill="#ffffff" shape-rendering="crispEdges"/>
<rect x="237" y="544" width="3" height="3" fill="#ffffff" shape-rendering="crispEdges"/><rect x="238" y="545" width="1" height="1" fill="#000" shape-rendering="crispEdges"/>
<rect x="232" y="544" width="3" height="3" fill="#ffffff" shape-rendering="crispEdges"/>
<rect x="227" y="544" width="3" height="3" fill="#ffffff" shape-rendering="crispEdges"/>
<rect x="222" y="544" width="3" height="3" fill="#ffffff" shape-rendering="crispEdges"/><rect x="223" y="545" width="1" height="1" fill="#000" shape-rendering="crispEdges"/>
<rect x="218" y="544" width="3" height="3" fill="#ffffff" shape-rendering="crispEdges"/>
<rect x="191" y="534" width="3" height="3" fill="#ffffff" shape-rendering="crispEdges"/>
<rect x="188" y="531" width="3" height="3" fill="#ffffff" shape-rendering="crispEdges"/>
<rect x="185" y="527" width="3" height="3" fill="#ffffff" shape-rendering="crispEdges"/><rect x="186" y="528" width="1" height="1" fill="#000" shape-rendering="crispEdges"/>
<rect x="182" y="523" width="3" height="3" fill="#ffffff" shape-rendering="crispEdges"/>
<rect x="180" y="518" width="3" height="3" fill="#ffffff" shape-rendering="crispEdges"/>
<rect x="245" y="547" width="3" height="3" fill="#ffffff" shape-rendering="crispEdges"/>
<rect x="239" y="547" width="3" height="3" fill="#ffffff" shape-rendering="crispEdges"/>
<rect x="234" y="547" width="3" height="3" fill="#ffffff" shape-rendering="crispEdges"/>
<rect x="229" y="547" width="3" height="3" fill="#ffffff" shape-rendering="crispEdges"/>
<rect x="223" y="547" width="3" height="3" fill="#ffffff" shape-rendering="crispEdges"/>
<rect x="218" y="547" width="3" height="3" fill="#ffffff" shape-rendering="crispEdges"/>
<rect x="213" y="547" width="3" height="3" fill="#ffffff" shape-rendering="crispEdges"/>
<rect x="198" y="541" width="3" height="3" fill="#ffffff" shape-rendering="crispEdges"/><rect x="199" y="542" width="1" height="1" fill="#000" shape-rendering="crispEdges"/>
<rect x="261" y="541" width="3" height="3" fill="#ffffff" shape-rendering="crispEdges"/><rect x="262" y="542" width="1" height="1" fill="#000" shape-rendering="crispEdges"/>
<rect x="127" y="655" width="3" height="3" fill="#ffffff" shape-rendering="crispEdges"/><rect x="128" y="656" width="1" height="1" fill="#000" shape-rendering="crispEdges"/>
<rect x="333" y="652" width="3" height="3" fill="#ffffff" shape-rendering="crispEdges"/><rect x="334" y="653" width="1" height="1" fill="#000" shape-rendering="crispEdges"/>
<circle cx="354.4" cy="184.2" r="2.6" fill="#ffffff"/>
<circle cx="358.4" cy="188.3" r="1.9" fill="#000" stroke="#ffffff" stroke-width="1.2"/>
<circle cx="358.4" cy="197.4" r="1.9" fill="#000" stroke="#ffffff" stroke-width="1.2"/>
<rect x="357" y="214" width="3" height="3" fill="#ffffff" shape-rendering="crispEdges"/>
<rect x="353" y="214" width="3" height="3" fill="#ffffff" shape-rendering="crispEdges"/>
<rect x="353" y="233" width="3" height="3" fill="#ffffff" shape-rendering="crispEdges"/><rect x="354" y="234" width="1" height="1" fill="#000" shape-rendering="crispEdges"/>
<rect x="357" y="233" width="3" height="3" fill="#ffffff" shape-rendering="crispEdges"/><rect x="358" y="234" width="1" height="1" fill="#000" shape-rendering="crispEdges"/>
<rect x="353" y="241" width="3" height="3" fill="#ffffff" shape-rendering="crispEdges"/><rect x="354" y="242" width="1" height="1" fill="#000" shape-rendering="crispEdges"/>
<rect x="357" y="241" width="3" height="3" fill="#ffffff" shape-rendering="crispEdges"/><rect x="358" y="242" width="1" height="1" fill="#000" shape-rendering="crispEdges"/>
<circle cx="354.4" cy="251.9" r="2.6" fill="#ffffff"/>
<circle cx="358.4" cy="251.9" r="2.6" fill="#ffffff"/>
<circle cx="361.1" cy="280.5" r="2.6" fill="#ffffff"/>
<circle cx="357.2" cy="284.2" r="2.4" fill="#ffffff"/>
<circle cx="466.4" cy="184.2" r="2.6" fill="#ffffff"/>
<circle cx="462.4" cy="188.3" r="1.9" fill="#000" stroke="#ffffff" stroke-width="1.2"/>
<circle cx="462.4" cy="197.4" r="1.9" fill="#000" stroke="#ffffff" stroke-width="1.2"/>
<rect x="461" y="214" width="3" height="3" fill="#ffffff" shape-rendering="crispEdges"/>
<rect x="465" y="214" width="3" height="3" fill="#ffffff" shape-rendering="crispEdges"/>
<rect x="465" y="233" width="3" height="3" fill="#ffffff" shape-rendering="crispEdges"/><rect x="466" y="234" width="1" height="1" fill="#000" shape-rendering="crispEdges"/>
<rect x="461" y="233" width="3" height="3" fill="#ffffff" shape-rendering="crispEdges"/><rect x="462" y="234" width="1" height="1" fill="#000" shape-rendering="crispEdges"/>
<rect x="465" y="241" width="3" height="3" fill="#ffffff" shape-rendering="crispEdges"/><rect x="466" y="242" width="1" height="1" fill="#000" shape-rendering="crispEdges"/>
<rect x="461" y="241" width="3" height="3" fill="#ffffff" shape-rendering="crispEdges"/><rect x="462" y="242" width="1" height="1" fill="#000" shape-rendering="crispEdges"/>
<circle cx="466.4" cy="251.9" r="2.6" fill="#ffffff"/>
<circle cx="462.4" cy="251.9" r="2.6" fill="#ffffff"/>
<circle cx="459.7" cy="280.5" r="2.6" fill="#ffffff"/>
<circle cx="463.6" cy="284.2" r="2.4" fill="#ffffff"/>
<circle cx="410.4" cy="185.5" r="2.6" fill="#ffffff"/>
<circle cx="410.4" cy="188.3" r="2.2" fill="#ffffff"/>
<circle cx="410.4" cy="280.5" r="2.4" fill="#ffffff"/>
<circle cx="410.4" cy="284.2" r="2.4" fill="#ffffff"/>
<circle cx="371.5" cy="296.8" r="2.6" fill="#ffffff"/>
<circle cx="367.3" cy="302.6" r="2.6" fill="#ffffff"/>
<circle cx="367.3" cy="354.1" r="2.4" fill="#ffffff"/>
<circle cx="371.5" cy="354.1" r="2.4" fill="#ffffff"/>
<circle cx="367.3" cy="384.1" r="2.6" fill="#ffffff"/>
<circle cx="371.5" cy="388.3" r="2.6" fill="#ffffff"/>
<circle cx="307.3" cy="384.1" r="2.6" fill="#ffffff"/>
<circle cx="302.4" cy="388.3" r="2.6" fill="#ffffff"/>
<rect x="328" y="325" width="3" height="3" fill="#ffffff" shape-rendering="crispEdges"/>
<rect x="325" y="323" width="3" height="3" fill="#ffffff" shape-rendering="crispEdges"/>
<rect x="331" y="322" width="3" height="3" fill="#ffffff" shape-rendering="crispEdges"/>
<rect x="337" y="317" width="3" height="3" fill="#ffffff" shape-rendering="crispEdges"/>
<rect x="343" y="313" width="3" height="3" fill="#ffffff" shape-rendering="crispEdges"/>
<rect x="349" y="309" width="3" height="3" fill="#ffffff" shape-rendering="crispEdges"/>
<rect x="356" y="306" width="3" height="3" fill="#ffffff" shape-rendering="crispEdges"/>
<rect x="328" y="319" width="3" height="3" fill="#ffffff" shape-rendering="crispEdges"/><rect x="329" y="320" width="1" height="1" fill="#000" shape-rendering="crispEdges"/>
<rect x="334" y="314" width="3" height="3" fill="#ffffff" shape-rendering="crispEdges"/><rect x="335" y="315" width="1" height="1" fill="#000" shape-rendering="crispEdges"/>
<rect x="340" y="309" width="3" height="3" fill="#ffffff" shape-rendering="crispEdges"/><rect x="341" y="310" width="1" height="1" fill="#000" shape-rendering="crispEdges"/>
<rect x="346" y="306" width="3" height="3" fill="#ffffff" shape-rendering="crispEdges"/><rect x="347" y="307" width="1" height="1" fill="#000" shape-rendering="crispEdges"/>
<rect x="353" y="302" width="3" height="3" fill="#ffffff" shape-rendering="crispEdges"/><rect x="354" y="303" width="1" height="1" fill="#000" shape-rendering="crispEdges"/>
<rect x="360" y="299" width="3" height="3" fill="#ffffff" shape-rendering="crispEdges"/><rect x="361" y="300" width="1" height="1" fill="#000" shape-rendering="crispEdges"/>
<rect x="319" y="339" width="3" height="3" fill="#ffffff" shape-rendering="crispEdges"/>
<rect x="310" y="364" width="3" height="3" fill="#ffffff" shape-rendering="crispEdges"/>
<rect x="313" y="356" width="3" height="3" fill="#ffffff" shape-rendering="crispEdges"/>
<rect x="315" y="342" width="3" height="3" fill="#ffffff" shape-rendering="crispEdges"/><rect x="316" y="343" width="1" height="1" fill="#000" shape-rendering="crispEdges"/>
<rect x="308" y="360" width="3" height="3" fill="#ffffff" shape-rendering="crispEdges"/><rect x="309" y="361" width="1" height="1" fill="#000" shape-rendering="crispEdges"/>
<rect x="305" y="374" width="3" height="3" fill="#ffffff" shape-rendering="crispEdges"/><rect x="306" y="375" width="1" height="1" fill="#000" shape-rendering="crispEdges"/>
<rect x="323" y="333" width="3" height="3" fill="#ffffff" shape-rendering="crispEdges"/><rect x="324" y="334" width="1" height="1" fill="#000" shape-rendering="crispEdges"/>
<circle cx="395.5" cy="317.4" r="2.8" fill="#ffff00"/>
<circle cx="400.2" cy="319" r="2.8" fill="#ffff00"/>
<circle cx="406.4" cy="316.8" r="2.4" fill="#ffffff"/>
<circle cx="411.4" cy="319.4" r="2.6" fill="#ffffff"/>
<circle cx="415.9" cy="320.2" r="2.4" fill="#00ff00"/>
<circle cx="444.4" cy="310.7" r="2.8" fill="#ffffff"/>
<circle cx="462.3" cy="301.2" r="2.8" fill="#ffffff"/>
<circle cx="460" cy="306.2" r="2.4" fill="#ffffff"/>
<rect x="465" y="307" width="3" height="3" fill="#ffffff" shape-rendering="crispEdges"/>
<rect x="467" y="311" width="3" height="3" fill="#ffffff" shape-rendering="crispEdges"/>
<rect x="469" y="315" width="3" height="3" fill="#ffffff" shape-rendering="crispEdges"/>
<rect x="470" y="319" width="3" height="3" fill="#ffffff" shape-rendering="crispEdges"/>
<rect x="471" y="321" width="3" height="3" fill="#ffffff" shape-rendering="crispEdges"/>
<rect x="397" y="333" width="3" height="3" fill="#ffff00" shape-rendering="crispEdges"/>
<rect x="401" y="344" width="3" height="3" fill="#ffff00" shape-rendering="crispEdges"/>
<rect x="403" y="351" width="3" height="3" fill="#ffff00" shape-rendering="crispEdges"/>
<rect x="403" y="356" width="3" height="3" fill="#ffff00" shape-rendering="crispEdges"/>
<rect x="411" y="343" width="3" height="3" fill="#ffffff" shape-rendering="crispEdges"/>
<rect x="414" y="343" width="3" height="3" fill="#ffffff" shape-rendering="crispEdges"/>
<rect x="418" y="343" width="3" height="3" fill="#00ff00" shape-rendering="crispEdges"/>
<rect x="411" y="348" width="3" height="3" fill="#ffffff" shape-rendering="crispEdges"/>
<rect x="415" y="353" width="3" height="3" fill="#ffffff" shape-rendering="crispEdges"/>
<rect x="419" y="353" width="3" height="3" fill="#00ff00" shape-rendering="crispEdges"/>
<rect x="408" y="330" width="3" height="3" fill="#ffffff" shape-rendering="crispEdges"/>
<rect x="401" y="346" width="3" height="3" fill="#ffff00" shape-rendering="crispEdges"/><rect x="402" y="347" width="1" height="1" fill="#000" shape-rendering="crispEdges"/>
<rect x="401" y="350" width="3" height="3" fill="#ffff00" shape-rendering="crispEdges"/><rect x="402" y="351" width="1" height="1" fill="#000" shape-rendering="crispEdges"/>
<rect x="401" y="371" width="3" height="3" fill="#ffff00" shape-rendering="crispEdges"/>
<rect x="415" y="373" width="3" height="3" fill="#ffffff" shape-rendering="crispEdges"/>
<rect x="417" y="370" width="2" height="2" fill="#00ff00" shape-rendering="crispEdges"/>
<rect x="404" y="383" width="3" height="3" fill="#ffff00" shape-rendering="crispEdges"/>
<rect x="400" y="375" width="3" height="3" fill="#ffff00" shape-rendering="crispEdges"/>
<rect x="411" y="377" width="3" height="3" fill="#ffffff" shape-rendering="crispEdges"/>
<rect x="414" y="373" width="2" height="2" fill="#00ff00" shape-rendering="crispEdges"/>
<rect x="401" y="386" width="3" height="3" fill="#ffff00" shape-rendering="crispEdges"/>
<rect x="399" y="378" width="3" height="3" fill="#ffff00" shape-rendering="crispEdges"/>
<rect x="408" y="381" width="3" height="3" fill="#ffffff" shape-rendering="crispEdges"/>
<rect x="411" y="377" width="2" height="2" fill="#00ff00" shape-rendering="crispEdges"/>
<rect x="398" y="389" width="3" height="3" fill="#ffff00" shape-rendering="crispEdges"/>
<rect x="398" y="381" width="3" height="3" fill="#ffff00" shape-rendering="crispEdges"/>
<rect x="404" y="386" width="3" height="3" fill="#ffffff" shape-rendering="crispEdges"/>
<rect x="409" y="381" width="2" height="2" fill="#00ff00" shape-rendering="crispEdges"/>
<rect x="395" y="393" width="3" height="3" fill="#ffff00" shape-rendering="crispEdges"/>
<rect x="397" y="385" width="3" height="3" fill="#ffff00" shape-rendering="crispEdges"/>
<rect x="401" y="390" width="3" height="3" fill="#ffffff" shape-rendering="crispEdges"/>
<rect x="406" y="384" width="2" height="2" fill="#00ff00" shape-rendering="crispEdges"/>
<rect x="392" y="396" width="3" height="3" fill="#ffff00" shape-rendering="crispEdges"/>
<circle cx="376.7" cy="405.3" r="2.6" fill="#ffff00"/>
<circle cx="381.2" cy="408.7" r="2.6" fill="#ffff00"/>
<circle cx="381.2" cy="402" r="2.6" fill="#ff8000"/>
<circle cx="384.5" cy="404.8" r="2.6" fill="#ff8000"/>
<circle cx="384" cy="398.6" r="2.6" fill="#3838ff"/>
<circle cx="387.9" cy="402" r="2.6" fill="#3838ff"/>
<circle cx="387.9" cy="397.3" r="2.6" fill="#ffffff"/>
<circle cx="392.4" cy="399.7" r="2.6" fill="#ffffff"/>
<circle cx="391.8" cy="393.6" r="2.6" fill="#00ff00"/>
<circle cx="396.3" cy="395.3" r="2.6" fill="#00ff00"/>
<circle cx="395.7" cy="390.8" r="2.6" fill="#ff4000"/>
<circle cx="400.2" cy="397.5" r="2.6" fill="#ff4000"/>
<circle cx="463.4" cy="406.5" r="2" fill="#ffffff"/>
<circle cx="460.6" cy="369.4" r="1.8" fill="#ffffff"/>
<circle cx="381.5" cy="460" r="2.6" fill="#ffff00"/>
<circle cx="381.5" cy="513" r="2.6" fill="#ffff00"/>
<circle cx="385" cy="456.4" r="2.6" fill="#ff8000"/>
<circle cx="385" cy="509.4" r="2.6" fill="#ff8000"/>
<circle cx="388.3" cy="452.8" r="2.6" fill="#3838ff"/>
<circle cx="388.3" cy="505.8" r="2.6" fill="#3838ff"/>
<circle cx="392.5" cy="449.2" r="2.6" fill="#ffffff"/>
<circle cx="392.5" cy="502.2" r="2.6" fill="#ffffff"/>
<circle cx="396.5" cy="445.6" r="2.6" fill="#00ff00"/>
<circle cx="396.5" cy="498.6" r="2.6" fill="#00ff00"/>
<circle cx="400.2" cy="442" r="2.6" fill="#ff4000"/>
<circle cx="400.2" cy="495" r="2.6" fill="#ff4000"/>
<circle cx="381.5" cy="542" r="2.4" fill="#ffff00"/>
<circle cx="385" cy="539.3" r="2.4" fill="#ff8000"/>
<circle cx="388.3" cy="535.6" r="2.4" fill="#3838ff"/>
<circle cx="392.5" cy="530.8" r="2.4" fill="#ffffff"/>
<circle cx="396.5" cy="527.4" r="2.4" fill="#00ff00"/>
<circle cx="400.2" cy="524.4" r="2.4" fill="#ff4000"/>
<circle cx="377.5" cy="460" r="2.4" fill="#ffff00"/>
<circle cx="377.5" cy="513" r="2.4" fill="#ffff00"/>
<circle cx="377.5" cy="546.3" r="2.6" fill="#ffff00"/>
<rect x="417" y="475" width="3" height="3" fill="#ffff00" shape-rendering="crispEdges"/>
<rect x="420" y="472" width="3" height="3" fill="#ff8000" shape-rendering="crispEdges"/>
<rect x="422" y="469" width="3" height="3" fill="#3838ff" shape-rendering="crispEdges"/>
<rect x="425" y="466" width="3" height="3" fill="#ffffff" shape-rendering="crispEdges"/>
<rect x="427" y="463" width="3" height="3" fill="#00ff00" shape-rendering="crispEdges"/>
<rect x="430" y="460" width="3" height="3" fill="#ff4000" shape-rendering="crispEdges"/>
<circle cx="452" cy="542" r="2.4" fill="#ffff00"/>
<circle cx="452" cy="546.3" r="2.4" fill="#ffff00"/>
<circle cx="463.6" cy="542" r="2.4" fill="#ffff00"/>
<circle cx="463.6" cy="546.3" r="2.4" fill="#ffff00"/>
<circle cx="493.5" cy="542" r="2.4" fill="#ffff00"/>
<circle cx="497.3" cy="546.3" r="2.4" fill="#ffff00"/>
<circle cx="452" cy="530.8" r="2.4" fill="#ffffff"/>
<circle cx="463.6" cy="530.8" r="2.4" fill="#ffffff"/>
<circle cx="493.5" cy="530.8" r="2.6" fill="#ffffff"/>
<circle cx="497.3" cy="535" r="2.4" fill="#ffffff"/>
<circle cx="497.3" cy="527.4" r="2.4" fill="#00ff00"/>
<circle cx="493.5" cy="526" r="2.4" fill="#00ff00"/>
<circle cx="463.6" cy="524.4" r="2" fill="#ff4000"/>
<circle cx="497.8" cy="338.6" r="2.8" fill="#ffffff"/>
<circle cx="493.5" cy="342.8" r="2.4" fill="#ffffff"/>
<rect x="481" y="336" width="3" height="3" fill="#ffffff" shape-rendering="crispEdges"/><rect x="482" y="337" width="1" height="1" fill="#000" shape-rendering="crispEdges"/>
<rect x="485" y="337" width="3" height="3" fill="#ffffff" shape-rendering="crispEdges"/><rect x="486" y="338" width="1" height="1" fill="#000" shape-rendering="crispEdges"/>
<rect x="488" y="338" width="3" height="3" fill="#ffffff" shape-rendering="crispEdges"/><rect x="489" y="339" width="1" height="1" fill="#000" shape-rendering="crispEdges"/>
<rect x="489" y="339" width="3" height="3" fill="#ffffff" shape-rendering="crispEdges"/>
<rect x="486" y="337" width="3" height="3" fill="#ffffff" shape-rendering="crispEdges"/>
<rect x="416" y="364" width="3" height="3" fill="#ffffff" shape-rendering="crispEdges"/><rect x="417" y="365" width="1" height="1" fill="#000" shape-rendering="crispEdges"/>
<rect x="471" y="327" width="3" height="3" fill="#ffffff" shape-rendering="crispEdges"/><rect x="472" y="328" width="1" height="1" fill="#000" shape-rendering="crispEdges"/>
<circle cx="505" cy="321.7" r="2" fill="#ffff00"/>
<circle cx="506.5" cy="321.5" r="2.6" fill="#ffffff"/>
<circle cx="511.7" cy="323.5" r="2.2" fill="#ffffff"/>
<circle cx="528.6" cy="313.8" r="2" fill="#ffffff"/>
<rect x="531" y="321" width="3" height="3" fill="#ffffff" shape-rendering="crispEdges"/>
<rect x="533" y="325" width="3" height="3" fill="#ffffff" shape-rendering="crispEdges"/>
<rect x="535" y="329" width="3" height="3" fill="#ffffff" shape-rendering="crispEdges"/>
<rect x="538" y="333" width="3" height="3" fill="#ffffff" shape-rendering="crispEdges"/>
<rect x="545" y="348" width="3" height="3" fill="#ffffff" shape-rendering="crispEdges"/><rect x="546" y="349" width="1" height="1" fill="#000" shape-rendering="crispEdges"/>
<rect x="548" y="349" width="3" height="3" fill="#ffffff" shape-rendering="crispEdges"/><rect x="549" y="350" width="1" height="1" fill="#000" shape-rendering="crispEdges"/>
<rect x="552" y="351" width="3" height="3" fill="#ffffff" shape-rendering="crispEdges"/><rect x="553" y="352" width="1" height="1" fill="#000" shape-rendering="crispEdges"/>
<rect x="555" y="351" width="3" height="3" fill="#ffffff" shape-rendering="crispEdges"/>
<rect x="557" y="353" width="3" height="3" fill="#ffffff" shape-rendering="crispEdges"/>
<circle cx="564.4" cy="352.4" r="2.6" fill="#ffffff"/>
<circle cx="560.6" cy="355.6" r="2.4" fill="#ffffff"/>
<rect x="514" y="334" width="3" height="3" fill="#ffffff" shape-rendering="crispEdges"/>
<rect x="516" y="344" width="3" height="3" fill="#ffffff" shape-rendering="crispEdges"/>
<rect x="519" y="355" width="3" height="3" fill="#ffffff" shape-rendering="crispEdges"/>
<rect x="521" y="365" width="3" height="3" fill="#ffffff" shape-rendering="crispEdges"/>
<rect x="523" y="376" width="3" height="3" fill="#ffffff" shape-rendering="crispEdges"/>
<rect x="525" y="387" width="3" height="3" fill="#ffffff" shape-rendering="crispEdges"/>
<rect x="526" y="397" width="3" height="3" fill="#ffffff" shape-rendering="crispEdges"/>
<rect x="528" y="408" width="3" height="3" fill="#ffffff" shape-rendering="crispEdges"/>
<rect x="529" y="419" width="3" height="3" fill="#ffffff" shape-rendering="crispEdges"/>
<rect x="511" y="342" width="2" height="2" fill="#ffff00" shape-rendering="crispEdges"/>
<rect x="513" y="354" width="2" height="2" fill="#ffff00" shape-rendering="crispEdges"/>
<rect x="516" y="366" width="2" height="2" fill="#ffff00" shape-rendering="crispEdges"/>
<rect x="518" y="378" width="2" height="2" fill="#ffff00" shape-rendering="crispEdges"/>
<rect x="520" y="390" width="2" height="2" fill="#ffff00" shape-rendering="crispEdges"/>
<rect x="522" y="402" width="2" height="2" fill="#ffff00" shape-rendering="crispEdges"/>
<rect x="523" y="414" width="2" height="2" fill="#ffff00" shape-rendering="crispEdges"/>
<circle cx="530.4" cy="541.1" r="2.6" fill="#00ff00"/>
<circle cx="530.4" cy="545.5" r="2.6" fill="#ffffff"/>
<circle cx="530.4" cy="556.2" r="2.6" fill="#ffff00"/>
<circle cx="560.6" cy="541.1" r="2.6" fill="#00ff00"/>
<circle cx="560.6" cy="545.5" r="2.6" fill="#ffffff"/>
<circle cx="560.6" cy="556.2" r="2.6" fill="#ffff00"/>
<circle cx="526.7" cy="547.5" r="2.6" fill="#ffffff"/>
<circle cx="526.7" cy="560.3" r="2.6" fill="#ffff00"/>
<circle cx="564.3" cy="547.5" r="2.6" fill="#ffffff"/>
<circle cx="564.3" cy="560.3" r="2.6" fill="#ffff00"/>
<circle cx="530.4" cy="425" r="2" fill="#ffff00"/>
<rect x="539" y="341" width="3" height="3" fill="#ffffff" shape-rendering="crispEdges"/><rect x="540" y="342" width="1" height="1" fill="#000" shape-rendering="crispEdges"/>
<rect x="515" y="321" width="3" height="3" fill="#ffffff" shape-rendering="crispEdges"/><rect x="516" y="322" width="1" height="1" fill="#000" shape-rendering="crispEdges"/>
<circle cx="509.3" cy="108.2" r="2.4" fill="#ffffff"/>
<circle cx="513.9" cy="111.1" r="2.8" fill="#ffffff"/>
<path d="M508.3 108.2 l-3 -3.5 l0 7 z" fill="#ffffff"/>
<circle cx="531.1" cy="101.3" r="2.2" fill="#ffffff"/>
<circle cx="531.7" cy="105.6" r="2" fill="#ffffff"/>
<circle cx="537" cy="108" r="2.2" fill="#ffffff"/>
<rect x="513" y="115" width="2" height="2" fill="#ffffff" shape-rendering="crispEdges"/>
<rect x="511" y="117" width="2" height="2" fill="#ffff00" shape-rendering="crispEdges"/>
<rect x="515" y="120" width="3" height="3" fill="#ffffff" shape-rendering="crispEdges"/>
<rect x="513" y="121" width="2" height="2" fill="#ffff00" shape-rendering="crispEdges"/>
<rect x="516" y="124" width="2" height="2" fill="#ffffff" shape-rendering="crispEdges"/>
<rect x="514" y="126" width="2" height="2" fill="#ffff00" shape-rendering="crispEdges"/>
<rect x="518" y="129" width="3" height="3" fill="#ffffff" shape-rendering="crispEdges"/>
<rect x="516" y="130" width="2" height="2" fill="#ffff00" shape-rendering="crispEdges"/>
<rect x="520" y="133" width="2" height="2" fill="#ffffff" shape-rendering="crispEdges"/>
<rect x="518" y="135" width="2" height="2" fill="#ffff00" shape-rendering="crispEdges"/>
<rect x="533" y="107" width="3" height="3" fill="#ffffff" shape-rendering="crispEdges"/><rect x="534" y="108" width="1" height="1" fill="#000" shape-rendering="crispEdges"/>
<rect x="540" y="110" width="3" height="3" fill="#ffffff" shape-rendering="crispEdges"/><rect x="541" y="111" width="1" height="1" fill="#000" shape-rendering="crispEdges"/>
<rect x="522" y="106" width="3" height="3" fill="#ffffff" shape-rendering="crispEdges"/><rect x="523" y="107" width="1" height="1" fill="#000" shape-rendering="crispEdges"/>
<rect x="544" y="114" width="3" height="3" fill="#ffffff" shape-rendering="crispEdges"/><rect x="545" y="115" width="1" height="1" fill="#000" shape-rendering="crispEdges"/>
<rect x="530" y="141" width="3" height="3" fill="#ffffff" shape-rendering="crispEdges"/><rect x="531" y="142" width="1" height="1" fill="#000" shape-rendering="crispEdges"/>
<circle cx="619.5" cy="108.2" r="2.4" fill="#ffffff"/>
<circle cx="614.9" cy="111.1" r="2.8" fill="#ffffff"/>
<path d="M620.5 108.2 l3 -3.5 l0 7 z" fill="#ffff00"/>
<circle cx="597.7" cy="101.3" r="2.2" fill="#ffffff"/>
<circle cx="597.1" cy="105.6" r="2" fill="#ffffff"/>
<circle cx="591.8" cy="108" r="2.2" fill="#ffffff"/>
<rect x="614" y="115" width="2" height="2" fill="#ffffff" shape-rendering="crispEdges"/>
<rect x="616" y="117" width="2" height="2" fill="#ffff00" shape-rendering="crispEdges"/>
<rect x="612" y="120" width="3" height="3" fill="#ffffff" shape-rendering="crispEdges"/>
<rect x="614" y="121" width="2" height="2" fill="#ffff00" shape-rendering="crispEdges"/>
<rect x="611" y="124" width="2" height="2" fill="#ffffff" shape-rendering="crispEdges"/>
<rect x="613" y="126" width="2" height="2" fill="#ffff00" shape-rendering="crispEdges"/>
<rect x="609" y="129" width="3" height="3" fill="#ffffff" shape-rendering="crispEdges"/>
<rect x="611" y="130" width="2" height="2" fill="#ffff00" shape-rendering="crispEdges"/>
<rect x="607" y="133" width="2" height="2" fill="#ffffff" shape-rendering="crispEdges"/>
<rect x="609" y="135" width="2" height="2" fill="#ffff00" shape-rendering="crispEdges"/>
<rect x="593" y="107" width="3" height="3" fill="#ffffff" shape-rendering="crispEdges"/><rect x="594" y="108" width="1" height="1" fill="#000" shape-rendering="crispEdges"/>
<rect x="586" y="110" width="3" height="3" fill="#ffffff" shape-rendering="crispEdges"/><rect x="587" y="111" width="1" height="1" fill="#000" shape-rendering="crispEdges"/>
<rect x="604" y="106" width="3" height="3" fill="#ffffff" shape-rendering="crispEdges"/><rect x="605" y="107" width="1" height="1" fill="#000" shape-rendering="crispEdges"/>
<rect x="582" y="114" width="3" height="3" fill="#ffffff" shape-rendering="crispEdges"/><rect x="583" y="115" width="1" height="1" fill="#000" shape-rendering="crispEdges"/>
<rect x="596" y="141" width="3" height="3" fill="#ffffff" shape-rendering="crispEdges"/><rect x="597" y="142" width="1" height="1" fill="#000" shape-rendering="crispEdges"/>
<circle cx="532.9" cy="151.4" r="2.1" fill="#ffffff"/>
<rect x="535" y="154" width="3" height="3" fill="#ffffff" shape-rendering="crispEdges"/><rect x="536" y="155" width="1" height="1" fill="#000" shape-rendering="crispEdges"/>
<circle cx="539.5" cy="154.5" r="2.1" fill="#ffffff"/>
<rect x="542" y="156" width="3" height="3" fill="#ffffff" shape-rendering="crispEdges"/><rect x="543" y="157" width="1" height="1" fill="#000" shape-rendering="crispEdges"/>
<circle cx="546.4" cy="157" r="2.1" fill="#ffffff"/>
<rect x="549" y="158" width="3" height="3" fill="#ffffff" shape-rendering="crispEdges"/><rect x="550" y="159" width="1" height="1" fill="#000" shape-rendering="crispEdges"/>
<circle cx="553.5" cy="158.6" r="2.1" fill="#ffffff"/>
<rect x="556" y="160" width="3" height="3" fill="#ffffff" shape-rendering="crispEdges"/><rect x="557" y="161" width="1" height="1" fill="#000" shape-rendering="crispEdges"/>
<circle cx="560.8" cy="159.4" r="2.1" fill="#ffffff"/>
<rect x="563" y="160" width="3" height="3" fill="#ffffff" shape-rendering="crispEdges"/><rect x="564" y="161" width="1" height="1" fill="#000" shape-rendering="crispEdges"/>
<circle cx="568.1" cy="159.4" r="2.1" fill="#ffffff"/>
<rect x="571" y="160" width="3" height="3" fill="#ffffff" shape-rendering="crispEdges"/><rect x="572" y="161" width="1" height="1" fill="#000" shape-rendering="crispEdges"/>
<circle cx="575.4" cy="158.6" r="2.1" fill="#ffffff"/>
<rect x="578" y="158" width="3" height="3" fill="#ffffff" shape-rendering="crispEdges"/><rect x="579" y="159" width="1" height="1" fill="#000" shape-rendering="crispEdges"/>
<circle cx="582.5" cy="157" r="2.1" fill="#ffffff"/>
<rect x="585" y="156" width="3" height="3" fill="#ffffff" shape-rendering="crispEdges"/><rect x="586" y="157" width="1" height="1" fill="#000" shape-rendering="crispEdges"/>
<circle cx="589.4" cy="154.5" r="2.1" fill="#ffffff"/>
<rect x="592" y="154" width="3" height="3" fill="#ffffff" shape-rendering="crispEdges"/><rect x="593" y="155" width="1" height="1" fill="#000" shape-rendering="crispEdges"/>
<circle cx="596" cy="151.4" r="2.1" fill="#ffffff"/>
<circle cx="564.4" cy="112.2" r="2.6" fill="#ffffff"/>
<circle cx="564.4" cy="116.2" r="2.6" fill="#ffffff"/>
<circle cx="564.4" cy="159.8" r="2.8" fill="#ffffff"/>
<circle cx="510.5" cy="176.4" r="2.8" fill="#ffff00"/>
<circle cx="510.5" cy="181.5" r="2.6" fill="#ffffff"/>
<circle cx="510.5" cy="304.3" r="2.6" fill="#ffffff"/>
<circle cx="534.8" cy="181.5" r="2.2" fill="#ffffff"/>
<circle cx="534.8" cy="301" r="2.6" fill="#ffffff"/>
<circle cx="612.4" cy="281.7" r="2.8" fill="#ffffff"/>
<circle cx="616.7" cy="282.8" r="2.8" fill="#ffff00"/>
<circle cx="620" cy="283.8" r="2.4" fill="#ffff00"/>
<circle cx="532.7" cy="173.5" r="2.2" fill="#ffff00"/>
<rect x="540" y="299" width="3" height="3" fill="#ffffff" shape-rendering="crispEdges"/><rect x="541" y="300" width="1" height="1" fill="#000" shape-rendering="crispEdges"/>
<rect x="545" y="297" width="3" height="3" fill="#ffffff" shape-rendering="crispEdges"/>
<rect x="550" y="296" width="3" height="3" fill="#ffffff" shape-rendering="crispEdges"/><rect x="551" y="297" width="1" height="1" fill="#000" shape-rendering="crispEdges"/>
<rect x="555" y="295" width="3" height="3" fill="#ffffff" shape-rendering="crispEdges"/>
<rect x="590" y="287" width="3" height="3" fill="#ffffff" shape-rendering="crispEdges"/><rect x="591" y="288" width="1" height="1" fill="#000" shape-rendering="crispEdges"/>
<rect x="595" y="285" width="3" height="3" fill="#ffffff" shape-rendering="crispEdges"/>
<rect x="600" y="284" width="3" height="3" fill="#ffffff" shape-rendering="crispEdges"/><rect x="601" y="285" width="1" height="1" fill="#000" shape-rendering="crispEdges"/>
<rect x="605" y="282" width="3" height="3" fill="#ffffff" shape-rendering="crispEdges"/>
<rect x="565" y="167" width="4" height="4" fill="#ffff00" shape-rendering="crispEdges"/>
<rect x="573" y="169" width="3" height="3" fill="#ffff00" shape-rendering="crispEdges"/>
<circle cx="580" cy="171.6" r="1.5" fill="#000" stroke="#ffff00" stroke-width="1.2"/>
<rect x="584" y="170" width="4" height="4" fill="#ffff00" shape-rendering="crispEdges"/>
<rect x="591" y="173" width="3" height="3" fill="#ffff00" shape-rendering="crispEdges"/>
<circle cx="598.2" cy="178.6" r="1.5" fill="#000" stroke="#ffff00" stroke-width="1.2"/>
<rect x="601" y="179" width="4" height="4" fill="#ffff00" shape-rendering="crispEdges"/>
<rect x="607" y="185" width="3" height="3" fill="#ffff00" shape-rendering="crispEdges"/>
<circle cx="612.1" cy="192.2" r="1.5" fill="#000" stroke="#ffff00" stroke-width="1.2"/>
<rect x="613" y="195" width="4" height="4" fill="#ffff00" shape-rendering="crispEdges"/>
<rect x="617" y="202" width="3" height="3" fill="#ffff00" shape-rendering="crispEdges"/>
<circle cx="620.1" cy="210" r="1.5" fill="#000" stroke="#ffff00" stroke-width="1.2"/>
<rect x="620" y="213" width="4" height="4" fill="#ffff00" shape-rendering="crispEdges"/>
<rect x="622" y="221" width="3" height="3" fill="#ffff00" shape-rendering="crispEdges"/>
<circle cx="623.2" cy="229.4" r="1.5" fill="#000" stroke="#ffff00" stroke-width="1.2"/>
<rect x="621" y="233" width="4" height="4" fill="#ffff00" shape-rendering="crispEdges"/>
<rect x="622" y="240" width="3" height="3" fill="#ffff00" shape-rendering="crispEdges"/>
<circle cx="623.5" cy="249" r="1.5" fill="#000" stroke="#ffff00" stroke-width="1.2"/>
<rect x="622" y="253" width="4" height="4" fill="#ffff00" shape-rendering="crispEdges"/>
<rect x="623" y="260" width="3" height="3" fill="#ffff00" shape-rendering="crispEdges"/>
<circle cx="623.7" cy="268.7" r="1.5" fill="#000" stroke="#ffff00" stroke-width="1.2"/>
<rect x="622" y="272" width="4" height="4" fill="#ffff00" shape-rendering="crispEdges"/>
<rect x="535" y="173" width="3" height="3" fill="#ffff00" shape-rendering="crispEdges"/>
<rect x="541" y="172" width="3" height="3" fill="#ffff00" shape-rendering="crispEdges"/><rect x="542" y="173" width="1" height="1" fill="#000" shape-rendering="crispEdges"/>
<rect x="547" y="171" width="3" height="3" fill="#ffff00" shape-rendering="crispEdges"/>
<rect x="553" y="170" width="3" height="3" fill="#ffff00" shape-rendering="crispEdges"/><rect x="554" y="171" width="1" height="1" fill="#000" shape-rendering="crispEdges"/>
<rect x="559" y="170" width="3" height="3" fill="#ffff00" shape-rendering="crispEdges"/>
<rect x="565" y="169" width="3" height="3" fill="#ffff00" shape-rendering="crispEdges"/><rect x="566" y="170" width="1" height="1" fill="#000" shape-rendering="crispEdges"/>
<rect x="593" y="186" width="2" height="2" fill="#ffffff" shape-rendering="crispEdges"/>
<rect x="604" y="197" width="2" height="2" fill="#ffffff" shape-rendering="crispEdges"/>
<rect x="609" y="211" width="2" height="2" fill="#ffffff" shape-rendering="crispEdges"/>
<rect x="611" y="226" width="2" height="2" fill="#ffffff" shape-rendering="crispEdges"/>
<circle cx="534.8" cy="181.5" r="1.8" fill="#ffffff"/>
<rect x="525" y="183" width="3" height="3" fill="#ffffff" shape-rendering="crispEdges"/><rect x="526" y="184" width="1" height="1" fill="#000" shape-rendering="crispEdges"/>
<rect x="529" y="299" width="3" height="3" fill="#ffffff" shape-rendering="crispEdges"/><rect x="530" y="300" width="1" height="1" fill="#000" shape-rendering="crispEdges"/>
<circle cx="629.2" cy="111" r="3" fill="#00ff00"/>
<circle cx="632.6" cy="109.5" r="2.8" fill="#ffffff"/>
<circle cx="640.3" cy="104.4" r="2.6" fill="#ffff00"/>
<circle cx="643.4" cy="105.9" r="2.6" fill="#ffff00"/>
<rect x="658" y="91" width="3" height="3" fill="#ffffff" shape-rendering="crispEdges"/><rect x="659" y="92" width="1" height="1" fill="#000" shape-rendering="crispEdges"/>
<rect x="655" y="93" width="3" height="3" fill="#ffff00" shape-rendering="crispEdges"/>
<rect x="653" y="95" width="3" height="3" fill="#ffffff" shape-rendering="crispEdges"/><rect x="654" y="96" width="1" height="1" fill="#000" shape-rendering="crispEdges"/>
<rect x="651" y="96" width="3" height="3" fill="#ffffff" shape-rendering="crispEdges"/>
<rect x="649" y="97" width="3" height="3" fill="#ffffff" shape-rendering="crispEdges"/><rect x="650" y="98" width="1" height="1" fill="#000" shape-rendering="crispEdges"/>
<rect x="646" y="99" width="3" height="3" fill="#ffff00" shape-rendering="crispEdges"/>
<rect x="644" y="101" width="3" height="3" fill="#ffffff" shape-rendering="crispEdges"/><rect x="645" y="102" width="1" height="1" fill="#000" shape-rendering="crispEdges"/>
<rect x="635" y="137" width="3" height="3" fill="#00ff00" shape-rendering="crispEdges"/>
<rect x="643" y="142" width="2" height="2" fill="#ffff00" shape-rendering="crispEdges"/>
<rect x="638" y="158" width="3" height="3" fill="#ffffff" shape-rendering="crispEdges"/>
<rect x="645" y="162" width="2" height="2" fill="#ff8000" shape-rendering="crispEdges"/>
<rect x="641" y="179" width="3" height="3" fill="#ffff00" shape-rendering="crispEdges"/>
<rect x="648" y="182" width="2" height="2" fill="#ffffff" shape-rendering="crispEdges"/>
<rect x="647" y="221" width="3" height="3" fill="#ffffff" shape-rendering="crispEdges"/>
<rect x="653" y="222" width="2" height="2" fill="#00ff00" shape-rendering="crispEdges"/>
<rect x="653" y="156" width="3" height="3" fill="#ffff00" shape-rendering="crispEdges"/>
<rect x="645" y="251" width="3" height="3" fill="#00ff00" shape-rendering="crispEdges"/>
<rect x="653" y="251" width="2" height="2" fill="#ffff00" shape-rendering="crispEdges"/>
<circle cx="650.1" cy="289.9" r="2.8" fill="#ffffff"/>
<circle cx="644.1" cy="293.9" r="2.8" fill="#00ff00"/>
<circle cx="657" cy="283.4" r="2.6" fill="#ffff00"/>
<rect x="679" y="77" width="2" height="2" fill="#ffffff" shape-rendering="crispEdges"/>
<rect x="684" y="74" width="3" height="3" fill="#ffffff" shape-rendering="crispEdges"/>
<rect x="688" y="72" width="2" height="2" fill="#ffffff" shape-rendering="crispEdges"/>
<rect x="692" y="70" width="3" height="3" fill="#ffffff" shape-rendering="crispEdges"/>
<rect x="697" y="69" width="2" height="2" fill="#ffffff" shape-rendering="crispEdges"/>
<rect x="702" y="68" width="3" height="3" fill="#ffffff" shape-rendering="crispEdges"/>
<rect x="687" y="77" width="2" height="2" fill="#ffffff" shape-rendering="crispEdges"/>
<rect x="692" y="75" width="2" height="2" fill="#ffffff" shape-rendering="crispEdges"/>
<rect x="697" y="73" width="2" height="2" fill="#ffffff" shape-rendering="crispEdges"/>
<rect x="703" y="72" width="2" height="2" fill="#ffffff" shape-rendering="crispEdges"/>
<circle cx="802" cy="111" r="3" fill="#00ff00"/>
<circle cx="798.6" cy="109.5" r="2.8" fill="#ffffff"/>
<circle cx="790.9" cy="104.4" r="2.6" fill="#ffff00"/>
<circle cx="787.8" cy="105.9" r="2.6" fill="#ffff00"/>
<rect x="772" y="91" width="3" height="3" fill="#ffffff" shape-rendering="crispEdges"/><rect x="773" y="92" width="1" height="1" fill="#000" shape-rendering="crispEdges"/>
<rect x="774" y="93" width="3" height="3" fill="#ffff00" shape-rendering="crispEdges"/>
<rect x="776" y="95" width="3" height="3" fill="#ffffff" shape-rendering="crispEdges"/><rect x="777" y="96" width="1" height="1" fill="#000" shape-rendering="crispEdges"/>
<rect x="778" y="96" width="3" height="3" fill="#ffffff" shape-rendering="crispEdges"/>
<rect x="780" y="97" width="3" height="3" fill="#ffffff" shape-rendering="crispEdges"/><rect x="781" y="98" width="1" height="1" fill="#000" shape-rendering="crispEdges"/>
<rect x="783" y="99" width="3" height="3" fill="#ffff00" shape-rendering="crispEdges"/>
<rect x="785" y="101" width="3" height="3" fill="#ffffff" shape-rendering="crispEdges"/><rect x="786" y="102" width="1" height="1" fill="#000" shape-rendering="crispEdges"/>
<rect x="795" y="137" width="3" height="3" fill="#00ff00" shape-rendering="crispEdges"/>
<rect x="787" y="142" width="2" height="2" fill="#ffff00" shape-rendering="crispEdges"/>
<rect x="792" y="158" width="3" height="3" fill="#ffffff" shape-rendering="crispEdges"/>
<rect x="784" y="162" width="2" height="2" fill="#ff8000" shape-rendering="crispEdges"/>
<rect x="789" y="179" width="3" height="3" fill="#ffff00" shape-rendering="crispEdges"/>
<rect x="781" y="182" width="2" height="2" fill="#ffffff" shape-rendering="crispEdges"/>
<rect x="783" y="221" width="3" height="3" fill="#ffffff" shape-rendering="crispEdges"/>
<rect x="776" y="222" width="2" height="2" fill="#00ff00" shape-rendering="crispEdges"/>
<rect x="777" y="156" width="3" height="3" fill="#ffff00" shape-rendering="crispEdges"/>
<rect x="785" y="251" width="3" height="3" fill="#00ff00" shape-rendering="crispEdges"/>
<rect x="777" y="251" width="2" height="2" fill="#ffff00" shape-rendering="crispEdges"/>
<circle cx="781.1" cy="289.9" r="2.8" fill="#ffffff"/>
<circle cx="787.1" cy="293.9" r="2.8" fill="#00ff00"/>
<circle cx="774.2" cy="283.4" r="2.6" fill="#ffff00"/>
<rect x="710" y="67" width="2" height="2" fill="#ffffff" shape-rendering="crispEdges"/>
<rect x="718" y="67" width="3" height="3" fill="#ffffff" shape-rendering="crispEdges"/>
<rect x="726" y="67" width="2" height="2" fill="#ffffff" shape-rendering="crispEdges"/>
<rect x="734" y="69" width="3" height="3" fill="#ffffff" shape-rendering="crispEdges"/>
<rect x="741" y="72" width="2" height="2" fill="#ffffff" shape-rendering="crispEdges"/>
<rect x="748" y="76" width="3" height="3" fill="#ffffff" shape-rendering="crispEdges"/>
<rect x="713" y="71" width="2" height="2" fill="#ffffff" shape-rendering="crispEdges"/>
<rect x="722" y="71" width="2" height="2" fill="#ffffff" shape-rendering="crispEdges"/>
<rect x="732" y="73" width="2" height="2" fill="#ffffff" shape-rendering="crispEdges"/>
<rect x="741" y="76" width="2" height="2" fill="#ffffff" shape-rendering="crispEdges"/>
<circle cx="715.6" cy="67.6" r="2.6" fill="#ffffff"/>
<circle cx="715.6" cy="71.7" r="2.6" fill="#ffffff"/>
<circle cx="715.6" cy="289.9" r="2.6" fill="#ffffff"/>
<circle cx="715.6" cy="283.4" r="2.4" fill="#ffff00"/>
<path d="M732.3 319.5 L723.1 323.6 L731 324.4 z" fill="#fff"/>
<circle cx="600.4" cy="333.1" r="2.8" fill="#ffff00"/>
<circle cx="604.9" cy="334.2" r="2.4" fill="#ffff00"/>
<circle cx="616.3" cy="333.9" r="2.6" fill="#ffffff"/>
<circle cx="666.6" cy="318.5" r="2.6" fill="#ffffff"/>
<circle cx="649.4" cy="326" r="2.6" fill="#ffffff"/>
<rect x="606" y="342" width="3" height="3" fill="#ffff00" shape-rendering="crispEdges"/>
<rect x="601" y="346" width="3" height="3" fill="#ffff00" shape-rendering="crispEdges"/><rect x="602" y="347" width="1" height="1" fill="#000" shape-rendering="crispEdges"/>
<rect x="615" y="345" width="3" height="3" fill="#ffffff" shape-rendering="crispEdges"/>
<rect x="620" y="344" width="3" height="3" fill="#00ff00" shape-rendering="crispEdges"/>
<rect x="606" y="350" width="3" height="3" fill="#ffff00" shape-rendering="crispEdges"/>
<rect x="602" y="354" width="3" height="3" fill="#ffff00" shape-rendering="crispEdges"/><rect x="603" y="355" width="1" height="1" fill="#000" shape-rendering="crispEdges"/>
<rect x="616" y="353" width="3" height="3" fill="#ffffff" shape-rendering="crispEdges"/>
<rect x="621" y="351" width="3" height="3" fill="#00ff00" shape-rendering="crispEdges"/>
<rect x="607" y="358" width="3" height="3" fill="#ffff00" shape-rendering="crispEdges"/>
<rect x="603" y="362" width="3" height="3" fill="#ffff00" shape-rendering="crispEdges"/><rect x="604" y="363" width="1" height="1" fill="#000" shape-rendering="crispEdges"/>
<rect x="616" y="360" width="3" height="3" fill="#ffffff" shape-rendering="crispEdges"/>
<rect x="621" y="359" width="3" height="3" fill="#00ff00" shape-rendering="crispEdges"/>
<rect x="607" y="366" width="3" height="3" fill="#ffff00" shape-rendering="crispEdges"/>
<rect x="604" y="370" width="3" height="3" fill="#ffff00" shape-rendering="crispEdges"/><rect x="605" y="371" width="1" height="1" fill="#000" shape-rendering="crispEdges"/>
<rect x="617" y="367" width="3" height="3" fill="#ffffff" shape-rendering="crispEdges"/>
<rect x="621" y="367" width="3" height="3" fill="#00ff00" shape-rendering="crispEdges"/>
<rect x="605" y="385" width="3" height="3" fill="#ffff00" shape-rendering="crispEdges"/>
<rect x="602" y="389" width="3" height="3" fill="#ffff00" shape-rendering="crispEdges"/><rect x="603" y="390" width="1" height="1" fill="#000" shape-rendering="crispEdges"/>
<rect x="617" y="391" width="3" height="3" fill="#ffffff" shape-rendering="crispEdges"/>
<rect x="621" y="387" width="2" height="2" fill="#00ff00" shape-rendering="crispEdges"/>
<rect x="603" y="390" width="3" height="3" fill="#ffff00" shape-rendering="crispEdges"/>
<rect x="599" y="395" width="3" height="3" fill="#ffff00" shape-rendering="crispEdges"/><rect x="600" y="396" width="1" height="1" fill="#000" shape-rendering="crispEdges"/>
<rect x="614" y="395" width="3" height="3" fill="#ffffff" shape-rendering="crispEdges"/>
<rect x="617" y="391" width="2" height="2" fill="#00ff00" shape-rendering="crispEdges"/>
<rect x="600" y="395" width="3" height="3" fill="#ffff00" shape-rendering="crispEdges"/>
<rect x="596" y="400" width="3" height="3" fill="#ffff00" shape-rendering="crispEdges"/><rect x="597" y="401" width="1" height="1" fill="#000" shape-rendering="crispEdges"/>
<rect x="610" y="400" width="3" height="3" fill="#ffffff" shape-rendering="crispEdges"/>
<rect x="614" y="395" width="2" height="2" fill="#00ff00" shape-rendering="crispEdges"/>
<rect x="598" y="400" width="3" height="3" fill="#ffff00" shape-rendering="crispEdges"/>
<rect x="593" y="405" width="3" height="3" fill="#ffff00" shape-rendering="crispEdges"/><rect x="594" y="406" width="1" height="1" fill="#000" shape-rendering="crispEdges"/>
<rect x="606" y="404" width="3" height="3" fill="#ffffff" shape-rendering="crispEdges"/>
<rect x="611" y="399" width="2" height="2" fill="#00ff00" shape-rendering="crispEdges"/>
<rect x="595" y="405" width="3" height="3" fill="#ffff00" shape-rendering="crispEdges"/>
<rect x="590" y="411" width="3" height="3" fill="#ffff00" shape-rendering="crispEdges"/><rect x="591" y="412" width="1" height="1" fill="#000" shape-rendering="crispEdges"/>
<rect x="602" y="409" width="3" height="3" fill="#ffffff" shape-rendering="crispEdges"/>
<rect x="607" y="403" width="2" height="2" fill="#00ff00" shape-rendering="crispEdges"/>
<circle cx="586.7" cy="421.7" r="2.8" fill="#ffff00"/>
<circle cx="586.7" cy="557" r="2.4" fill="#ffff00"/>
<circle cx="590.6" cy="419" r="1.9" fill="#ff8000"/>
<circle cx="590.6" cy="554.1" r="2.4" fill="#ff8000"/>
<circle cx="593.8" cy="416" r="1.9" fill="#3838ff"/>
<circle cx="593.8" cy="550.2" r="2.4" fill="#3838ff"/>
<circle cx="597.2" cy="412.4" r="2.8" fill="#ffffff"/>
<circle cx="597.2" cy="546.5" r="2.4" fill="#ffffff"/>
<circle cx="601.2" cy="409" r="1.9" fill="#00ff00"/>
<circle cx="601.2" cy="542.2" r="2.4" fill="#00ff00"/>
<circle cx="605.2" cy="406" r="1.9" fill="#ff4000"/>
<circle cx="605.2" cy="539" r="2.4" fill="#ff4000"/>
<circle cx="582.7" cy="421.7" r="2.8" fill="#ffff00"/>
<circle cx="582.7" cy="561.5" r="2.6" fill="#ffff00"/>
<rect x="663" y="353" width="2" height="2" fill="#ffffff" shape-rendering="crispEdges"/>
<rect x="681" y="368" width="2" height="2" fill="#ffffff" shape-rendering="crispEdges"/>
<rect x="671" y="362" width="2" height="2" fill="#ffffff" shape-rendering="crispEdges"/>
<rect x="680" y="329" width="3" height="3" fill="#ffffff" shape-rendering="crispEdges"/><rect x="681" y="330" width="1" height="1" fill="#000" shape-rendering="crispEdges"/>
<rect x="619" y="377" width="3" height="3" fill="#ffffff" shape-rendering="crispEdges"/><rect x="620" y="378" width="1" height="1" fill="#000" shape-rendering="crispEdges"/>
<path d="M666.5 319.5 L675.7 323.6 L667.8 324.4 z" fill="#fff"/>
<circle cx="798.4" cy="333.1" r="2.8" fill="#ffff00"/>
<circle cx="793.9" cy="334.2" r="2.4" fill="#ffff00"/>
<circle cx="782.5" cy="333.9" r="2.6" fill="#ffffff"/>
<circle cx="732.2" cy="318.5" r="2.6" fill="#ffffff"/>
<circle cx="749.4" cy="326" r="2.6" fill="#ffffff"/>
<rect x="791" y="342" width="3" height="3" fill="#ffff00" shape-rendering="crispEdges"/>
<rect x="796" y="346" width="3" height="3" fill="#ffff00" shape-rendering="crispEdges"/><rect x="797" y="347" width="1" height="1" fill="#000" shape-rendering="crispEdges"/>
<rect x="781" y="345" width="3" height="3" fill="#ffffff" shape-rendering="crispEdges"/>
<rect x="777" y="344" width="3" height="3" fill="#00ff00" shape-rendering="crispEdges"/>
<rect x="791" y="350" width="3" height="3" fill="#ffff00" shape-rendering="crispEdges"/>
<rect x="795" y="354" width="3" height="3" fill="#ffff00" shape-rendering="crispEdges"/><rect x="796" y="355" width="1" height="1" fill="#000" shape-rendering="crispEdges"/>
<rect x="781" y="353" width="3" height="3" fill="#ffffff" shape-rendering="crispEdges"/>
<rect x="776" y="351" width="3" height="3" fill="#00ff00" shape-rendering="crispEdges"/>
<rect x="790" y="358" width="3" height="3" fill="#ffff00" shape-rendering="crispEdges"/>
<rect x="794" y="362" width="3" height="3" fill="#ffff00" shape-rendering="crispEdges"/><rect x="795" y="363" width="1" height="1" fill="#000" shape-rendering="crispEdges"/>
<rect x="781" y="360" width="3" height="3" fill="#ffffff" shape-rendering="crispEdges"/>
<rect x="776" y="359" width="3" height="3" fill="#00ff00" shape-rendering="crispEdges"/>
<rect x="790" y="366" width="3" height="3" fill="#ffff00" shape-rendering="crispEdges"/>
<rect x="793" y="370" width="3" height="3" fill="#ffff00" shape-rendering="crispEdges"/><rect x="794" y="371" width="1" height="1" fill="#000" shape-rendering="crispEdges"/>
<rect x="780" y="367" width="3" height="3" fill="#ffffff" shape-rendering="crispEdges"/>
<rect x="775" y="367" width="3" height="3" fill="#00ff00" shape-rendering="crispEdges"/>
<rect x="791" y="385" width="3" height="3" fill="#ffff00" shape-rendering="crispEdges"/>
<rect x="794" y="389" width="3" height="3" fill="#ffff00" shape-rendering="crispEdges"/><rect x="795" y="390" width="1" height="1" fill="#000" shape-rendering="crispEdges"/>
<rect x="779" y="391" width="3" height="3" fill="#ffffff" shape-rendering="crispEdges"/>
<rect x="776" y="387" width="2" height="2" fill="#00ff00" shape-rendering="crispEdges"/>
<rect x="794" y="390" width="3" height="3" fill="#ffff00" shape-rendering="crispEdges"/>
<rect x="797" y="395" width="3" height="3" fill="#ffff00" shape-rendering="crispEdges"/><rect x="798" y="396" width="1" height="1" fill="#000" shape-rendering="crispEdges"/>
<rect x="783" y="395" width="3" height="3" fill="#ffffff" shape-rendering="crispEdges"/>
<rect x="779" y="391" width="2" height="2" fill="#00ff00" shape-rendering="crispEdges"/>
<rect x="797" y="395" width="3" height="3" fill="#ffff00" shape-rendering="crispEdges"/>
<rect x="800" y="400" width="3" height="3" fill="#ffff00" shape-rendering="crispEdges"/><rect x="801" y="401" width="1" height="1" fill="#000" shape-rendering="crispEdges"/>
<rect x="787" y="400" width="3" height="3" fill="#ffffff" shape-rendering="crispEdges"/>
<rect x="783" y="395" width="2" height="2" fill="#00ff00" shape-rendering="crispEdges"/>
<rect x="799" y="400" width="3" height="3" fill="#ffff00" shape-rendering="crispEdges"/>
<rect x="803" y="405" width="3" height="3" fill="#ffff00" shape-rendering="crispEdges"/><rect x="804" y="406" width="1" height="1" fill="#000" shape-rendering="crispEdges"/>
<rect x="791" y="404" width="3" height="3" fill="#ffffff" shape-rendering="crispEdges"/>
<rect x="786" y="399" width="2" height="2" fill="#00ff00" shape-rendering="crispEdges"/>
<rect x="802" y="405" width="3" height="3" fill="#ffff00" shape-rendering="crispEdges"/>
<rect x="806" y="411" width="3" height="3" fill="#ffff00" shape-rendering="crispEdges"/><rect x="807" y="412" width="1" height="1" fill="#000" shape-rendering="crispEdges"/>
<rect x="795" y="409" width="3" height="3" fill="#ffffff" shape-rendering="crispEdges"/>
<rect x="789" y="403" width="2" height="2" fill="#00ff00" shape-rendering="crispEdges"/>
<circle cx="812.1" cy="421.7" r="2.8" fill="#ffff00"/>
<circle cx="812.1" cy="557" r="2.4" fill="#ffff00"/>
<circle cx="808.2" cy="419" r="1.9" fill="#ff8000"/>
<circle cx="808.2" cy="554.1" r="2.4" fill="#ff8000"/>
<circle cx="805" cy="416" r="1.9" fill="#3838ff"/>
<circle cx="805" cy="550.2" r="2.4" fill="#3838ff"/>
<circle cx="801.6" cy="412.4" r="2.8" fill="#ffffff"/>
<circle cx="801.6" cy="546.5" r="2.4" fill="#ffffff"/>
<circle cx="797.6" cy="409" r="1.9" fill="#00ff00"/>
<circle cx="797.6" cy="542.2" r="2.4" fill="#00ff00"/>
<circle cx="793.6" cy="406" r="1.9" fill="#ff4000"/>
<circle cx="793.6" cy="539" r="2.4" fill="#ff4000"/>
<circle cx="816.1" cy="421.7" r="2.8" fill="#ffff00"/>
<circle cx="816.1" cy="561.5" r="2.6" fill="#ffff00"/>
<rect x="734" y="353" width="2" height="2" fill="#ffffff" shape-rendering="crispEdges"/>
<rect x="715" y="368" width="2" height="2" fill="#ffffff" shape-rendering="crispEdges"/>
<rect x="725" y="362" width="2" height="2" fill="#ffffff" shape-rendering="crispEdges"/>
<rect x="717" y="329" width="3" height="3" fill="#ffffff" shape-rendering="crispEdges"/><rect x="718" y="330" width="1" height="1" fill="#000" shape-rendering="crispEdges"/>
<rect x="778" y="377" width="3" height="3" fill="#ffffff" shape-rendering="crispEdges"/><rect x="779" y="378" width="1" height="1" fill="#000" shape-rendering="crispEdges"/>
<circle cx="699.4" cy="328" r="2.6" fill="#ffffff"/>
<circle cx="699.4" cy="372" r="2.4" fill="#ffffff"/>
<circle cx="699.4" cy="542.2" r="2.4" fill="#00ff00"/>
<circle cx="699.4" cy="546.5" r="2.4" fill="#ffffff"/>
<circle cx="699.4" cy="550.2" r="2.2" fill="#ffffff"/>
<circle cx="699.4" cy="557" r="2.2" fill="#ffff00"/>
<circle cx="699.4" cy="561.5" r="2.4" fill="#ffff00"/>
<circle cx="449.2" cy="574.5" r="2.4" fill="#ffff00"/>
<circle cx="449.2" cy="636.5" r="2.4" fill="#ffff00"/>
<circle cx="454.3" cy="579.5" r="2.6" fill="#ffff00"/>
<circle cx="454.3" cy="632.5" r="2.6" fill="#ffff00"/>
<rect x="453" y="604" width="3" height="3" fill="#ffff00" shape-rendering="crispEdges"/>
<rect x="448" y="604" width="3" height="3" fill="#ffff00" shape-rendering="crispEdges"/>
<circle cx="807.5" cy="574.5" r="2.4" fill="#ffff00"/>
<circle cx="807.5" cy="636.5" r="2.4" fill="#ffff00"/>
<circle cx="803.5" cy="579.5" r="2.6" fill="#ffff00"/>
<circle cx="803.5" cy="632.5" r="2.6" fill="#ffff00"/>
<circle cx="456.4" cy="574.5" r="2.4" fill="#ff8000"/>
<circle cx="456.4" cy="636.5" r="2.4" fill="#ff8000"/>
<circle cx="461.4" cy="579.5" r="2.6" fill="#ff8000"/>
<circle cx="461.4" cy="632.5" r="2.6" fill="#ff8000"/>
<rect x="460" y="604" width="3" height="3" fill="#ff8000" shape-rendering="crispEdges"/>
<rect x="455" y="604" width="3" height="3" fill="#ff8000" shape-rendering="crispEdges"/>
<circle cx="800.2" cy="574.5" r="2.4" fill="#ff8000"/>
<circle cx="800.2" cy="636.5" r="2.4" fill="#ff8000"/>
<circle cx="795.7" cy="579.5" r="2.6" fill="#ff8000"/>
<circle cx="795.7" cy="632.5" r="2.6" fill="#ff8000"/>
<circle cx="464.1" cy="574.5" r="2.4" fill="#3838ff"/>
<circle cx="464.1" cy="636.5" r="2.4" fill="#3838ff"/>
<circle cx="469.2" cy="579.5" r="2.6" fill="#3838ff"/>
<circle cx="469.2" cy="632.5" r="2.6" fill="#3838ff"/>
<rect x="468" y="604" width="3" height="3" fill="#3838ff" shape-rendering="crispEdges"/>
<rect x="463" y="604" width="3" height="3" fill="#3838ff" shape-rendering="crispEdges"/>
<circle cx="792.7" cy="574.5" r="2.4" fill="#3838ff"/>
<circle cx="792.7" cy="636.5" r="2.4" fill="#3838ff"/>
<circle cx="788" cy="579.5" r="2.6" fill="#3838ff"/>
<circle cx="788" cy="632.5" r="2.6" fill="#3838ff"/>
<circle cx="471.2" cy="574.5" r="2.4" fill="#ffffff"/>
<circle cx="471.2" cy="636.5" r="2.4" fill="#ffffff"/>
<circle cx="476.3" cy="579.5" r="2.6" fill="#ffffff"/>
<circle cx="476.3" cy="632.5" r="2.6" fill="#ffffff"/>
<circle cx="785.6" cy="574.5" r="2.4" fill="#ffffff"/>
<circle cx="785.6" cy="636.5" r="2.4" fill="#ffffff"/>
<circle cx="780.5" cy="579.5" r="2.6" fill="#ffffff"/>
<circle cx="780.5" cy="632.5" r="2.6" fill="#ffffff"/>
<circle cx="479.4" cy="574.5" r="2.4" fill="#00ff00"/>
<circle cx="479.4" cy="636.5" r="2.4" fill="#00ff00"/>
<circle cx="484.4" cy="579.5" r="2.6" fill="#00ff00"/>
<circle cx="484.4" cy="632.5" r="2.6" fill="#00ff00"/>
<rect x="483" y="604" width="3" height="3" fill="#00ff00" shape-rendering="crispEdges"/>
<circle cx="777.4" cy="574.5" r="2.4" fill="#00ff00"/>
<circle cx="777.4" cy="636.5" r="2.4" fill="#00ff00"/>
<circle cx="773.4" cy="579.5" r="2.6" fill="#00ff00"/>
<circle cx="773.4" cy="632.5" r="2.6" fill="#00ff00"/>
<circle cx="487.3" cy="574.5" r="2.4" fill="#ff4000"/>
<circle cx="487.3" cy="636.5" r="2.4" fill="#ff4000"/>
<circle cx="491.6" cy="579.5" r="2.6" fill="#ff4000"/>
<circle cx="491.6" cy="632.5" r="2.6" fill="#ff4000"/>
<rect x="491" y="604" width="3" height="3" fill="#ff4000" shape-rendering="crispEdges"/>
<rect x="486" y="604" width="3" height="3" fill="#ff4000" shape-rendering="crispEdges"/>
<circle cx="770.3" cy="574.5" r="2.4" fill="#ff4000"/>
<circle cx="770.3" cy="636.5" r="2.4" fill="#ff4000"/>
<circle cx="765.2" cy="579.5" r="2.6" fill="#ff4000"/>
<circle cx="765.2" cy="632.5" r="2.6" fill="#ff4000"/>
</g>
<g class="ru" shape-rendering="crispEdges">
<rect x="0" y="0" width="983" height="5" fill="#dcdcdc"/>
<rect x="0" y="5" width="983" height="15" fill="#c0c0c0"/>
<rect x="0" y="5" width="17" height="738" fill="#c0c0c0"/>
<rect x="17" y="739" width="966" height="1" fill="#ffffff"/>
<rect x="17" y="740" width="966" height="3" fill="#f0f0f0"/>
<rect x="1" y="5" width="1" height="738" fill="#000"/>
<rect x="2" y="28" width="15" height="1" fill="#000"/>
<rect x="9" y="26" width="8" height="1" fill="#000"/>
<rect x="974" y="20" width="9" height="20" fill="#0a141e"/>
<rect x="21" y="18" width="1" height="2" fill="#000"/>
<rect x="29" y="18" width="1" height="2" fill="#000"/>
<rect x="36" y="18" width="1" height="2" fill="#000"/>
<rect x="44" y="12" width="1" height="8" fill="#000"/>
<text x="46" y="15.4" class="rt">-260</text>
<rect x="51" y="18" width="1" height="2" fill="#000"/>
<rect x="59" y="18" width="1" height="2" fill="#000"/>
<rect x="66" y="18" width="1" height="2" fill="#000"/>
<rect x="74" y="18" width="1" height="2" fill="#000"/>
<rect x="81" y="16" width="1" height="4" fill="#000"/>
<rect x="89" y="18" width="1" height="2" fill="#000"/>
<rect x="96" y="18" width="1" height="2" fill="#000"/>
<rect x="104" y="18" width="1" height="2" fill="#000"/>
<rect x="111" y="18" width="1" height="2" fill="#000"/>
<rect x="119" y="12" width="1" height="8" fill="#000"/>
<text x="121" y="15.4" class="rt">-240</text>
<rect x="126" y="18" width="1" height="2" fill="#000"/>
<rect x="134" y="18" width="1" height="2" fill="#000"/>
<rect x="141" y="18" width="1" height="2" fill="#000"/>
<rect x="149" y="18" width="1" height="2" fill="#000"/>
<rect x="156" y="16" width="1" height="4" fill="#000"/>
<rect x="164" y="18" width="1" height="2" fill="#000"/>
<rect x="171" y="18" width="1" height="2" fill="#000"/>
<rect x="179" y="18" width="1" height="2" fill="#000"/>
<rect x="186" y="18" width="1" height="2" fill="#000"/>
<rect x="194" y="12" width="1" height="8" fill="#000"/>
<text x="196" y="15.4" class="rt">-220</text>
<rect x="201" y="18" width="1" height="2" fill="#000"/>
<rect x="209" y="18" width="1" height="2" fill="#000"/>
<rect x="216" y="18" width="1" height="2" fill="#000"/>
<rect x="224" y="18" width="1" height="2" fill="#000"/>
<rect x="231" y="16" width="1" height="4" fill="#000"/>
<rect x="239" y="18" width="1" height="2" fill="#000"/>
<rect x="246" y="18" width="1" height="2" fill="#000"/>
<rect x="254" y="18" width="1" height="2" fill="#000"/>
<rect x="261" y="18" width="1" height="2" fill="#000"/>
<rect x="269" y="12" width="1" height="8" fill="#000"/>
<text x="271" y="15.4" class="rt">-200</text>
<rect x="276" y="18" width="1" height="2" fill="#000"/>
<rect x="284" y="18" width="1" height="2" fill="#000"/>
<rect x="291" y="18" width="1" height="2" fill="#000"/>
<rect x="299" y="18" width="1" height="2" fill="#000"/>
<rect x="306" y="16" width="1" height="4" fill="#000"/>
<rect x="314" y="18" width="1" height="2" fill="#000"/>
<rect x="321" y="18" width="1" height="2" fill="#000"/>
<rect x="329" y="18" width="1" height="2" fill="#000"/>
<rect x="336" y="18" width="1" height="2" fill="#000"/>
<rect x="344" y="12" width="1" height="8" fill="#000"/>
<text x="346" y="15.4" class="rt">-180</text>
<rect x="351" y="18" width="1" height="2" fill="#000"/>
<rect x="359" y="18" width="1" height="2" fill="#000"/>
<rect x="366" y="18" width="1" height="2" fill="#000"/>
<rect x="374" y="18" width="1" height="2" fill="#000"/>
<rect x="381" y="16" width="1" height="4" fill="#000"/>
<rect x="389" y="18" width="1" height="2" fill="#000"/>
<rect x="396" y="18" width="1" height="2" fill="#000"/>
<rect x="404" y="18" width="1" height="2" fill="#000"/>
<rect x="411" y="18" width="1" height="2" fill="#000"/>
<rect x="419" y="12" width="1" height="8" fill="#000"/>
<text x="421" y="15.4" class="rt">-160</text>
<rect x="426" y="18" width="1" height="2" fill="#000"/>
<rect x="434" y="18" width="1" height="2" fill="#000"/>
<rect x="441" y="18" width="1" height="2" fill="#000"/>
<rect x="449" y="18" width="1" height="2" fill="#000"/>
<rect x="456" y="16" width="1" height="4" fill="#000"/>
<rect x="464" y="18" width="1" height="2" fill="#000"/>
<rect x="471" y="18" width="1" height="2" fill="#000"/>
<rect x="479" y="18" width="1" height="2" fill="#000"/>
<rect x="486" y="18" width="1" height="2" fill="#000"/>
<rect x="494" y="12" width="1" height="8" fill="#000"/>
<text x="496" y="15.4" class="rt">-140</text>
<rect x="501" y="18" width="1" height="2" fill="#000"/>
<rect x="509" y="18" width="1" height="2" fill="#000"/>
<rect x="516" y="18" width="1" height="2" fill="#000"/>
<rect x="524" y="18" width="1" height="2" fill="#000"/>
<rect x="531" y="16" width="1" height="4" fill="#000"/>
<rect x="539" y="18" width="1" height="2" fill="#000"/>
<rect x="546" y="18" width="1" height="2" fill="#000"/>
<rect x="554" y="18" width="1" height="2" fill="#000"/>
<rect x="561" y="18" width="1" height="2" fill="#000"/>
<rect x="569" y="12" width="1" height="8" fill="#000"/>
<text x="571" y="15.4" class="rt">-120</text>
<rect x="576" y="18" width="1" height="2" fill="#000"/>
<rect x="584" y="18" width="1" height="2" fill="#000"/>
<rect x="591" y="18" width="1" height="2" fill="#000"/>
<rect x="599" y="18" width="1" height="2" fill="#000"/>
<rect x="606" y="16" width="1" height="4" fill="#000"/>
<rect x="614" y="18" width="1" height="2" fill="#000"/>
<rect x="621" y="18" width="1" height="2" fill="#000"/>
<rect x="629" y="18" width="1" height="2" fill="#000"/>
<rect x="636" y="18" width="1" height="2" fill="#000"/>
<rect x="644" y="12" width="1" height="8" fill="#000"/>
<text x="646" y="15.4" class="rt">-100</text>
<rect x="651" y="18" width="1" height="2" fill="#000"/>
<rect x="659" y="18" width="1" height="2" fill="#000"/>
<rect x="666" y="18" width="1" height="2" fill="#000"/>
<rect x="674" y="18" width="1" height="2" fill="#000"/>
<rect x="681" y="16" width="1" height="4" fill="#000"/>
<rect x="689" y="18" width="1" height="2" fill="#000"/>
<rect x="696" y="18" width="1" height="2" fill="#000"/>
<rect x="704" y="18" width="1" height="2" fill="#000"/>
<rect x="711" y="18" width="1" height="2" fill="#000"/>
<rect x="719" y="12" width="1" height="8" fill="#000"/>
<text x="721" y="15.4" class="rt">-80</text>
<rect x="726" y="18" width="1" height="2" fill="#000"/>
<rect x="734" y="18" width="1" height="2" fill="#000"/>
<rect x="741" y="18" width="1" height="2" fill="#000"/>
<rect x="749" y="18" width="1" height="2" fill="#000"/>
<rect x="756" y="16" width="1" height="4" fill="#000"/>
<rect x="764" y="18" width="1" height="2" fill="#000"/>
<rect x="771" y="18" width="1" height="2" fill="#000"/>
<rect x="779" y="18" width="1" height="2" fill="#000"/>
<rect x="786" y="18" width="1" height="2" fill="#000"/>
<rect x="794" y="12" width="1" height="8" fill="#000"/>
<text x="796" y="15.4" class="rt">-60</text>
<rect x="801" y="18" width="1" height="2" fill="#000"/>
<rect x="809" y="18" width="1" height="2" fill="#000"/>
<rect x="816" y="18" width="1" height="2" fill="#000"/>
<rect x="824" y="18" width="1" height="2" fill="#000"/>
<rect x="831" y="16" width="1" height="4" fill="#000"/>
<rect x="839" y="18" width="1" height="2" fill="#000"/>
<rect x="846" y="18" width="1" height="2" fill="#000"/>
<rect x="854" y="18" width="1" height="2" fill="#000"/>
<rect x="861" y="18" width="1" height="2" fill="#000"/>
<rect x="869" y="12" width="1" height="8" fill="#000"/>
<text x="871" y="15.4" class="rt">-40</text>
<rect x="876" y="18" width="1" height="2" fill="#000"/>
<rect x="884" y="18" width="1" height="2" fill="#000"/>
<rect x="891" y="18" width="1" height="2" fill="#000"/>
<rect x="899" y="18" width="1" height="2" fill="#000"/>
<rect x="906" y="16" width="1" height="4" fill="#000"/>
<rect x="914" y="18" width="1" height="2" fill="#000"/>
<rect x="921" y="18" width="1" height="2" fill="#000"/>
<rect x="929" y="18" width="1" height="2" fill="#000"/>
<rect x="936" y="18" width="1" height="2" fill="#000"/>
<rect x="944" y="12" width="1" height="8" fill="#000"/>
<text x="946" y="15.4" class="rt">-20</text>
<rect x="951" y="18" width="1" height="2" fill="#000"/>
<rect x="959" y="18" width="1" height="2" fill="#000"/>
<rect x="966" y="18" width="1" height="2" fill="#000"/>
<rect x="974" y="18" width="1" height="2" fill="#000"/>
<rect x="981" y="16" width="1" height="4" fill="#000"/>
<rect x="15" y="33" width="2" height="1" fill="#000"/>
<rect x="15" y="41" width="2" height="1" fill="#000"/>
<rect x="15" y="48" width="2" height="1" fill="#000"/>
<rect x="15" y="56" width="2" height="1" fill="#000"/>
<rect x="13" y="63" width="4" height="1" fill="#000"/>
<rect x="15" y="71" width="2" height="1" fill="#000"/>
<rect x="15" y="78" width="2" height="1" fill="#000"/>
<rect x="15" y="86" width="2" height="1" fill="#000"/>
<rect x="15" y="93" width="2" height="1" fill="#000"/>
<rect x="9" y="101" width="8" height="1" fill="#000"/>
<text transform="translate(13 99) rotate(-90)" class="rt">100</text>
<rect x="15" y="108" width="2" height="1" fill="#000"/>
<rect x="15" y="116" width="2" height="1" fill="#000"/>
<rect x="15" y="123" width="2" height="1" fill="#000"/>
<rect x="15" y="131" width="2" height="1" fill="#000"/>
<rect x="13" y="138" width="4" height="1" fill="#000"/>
<rect x="15" y="146" width="2" height="1" fill="#000"/>
<rect x="15" y="153" width="2" height="1" fill="#000"/>
<rect x="15" y="161" width="2" height="1" fill="#000"/>
<rect x="15" y="168" width="2" height="1" fill="#000"/>
<rect x="9" y="176" width="8" height="1" fill="#000"/>
<text transform="translate(13 174) rotate(-90)" class="rt">80</text>
<rect x="15" y="183" width="2" height="1" fill="#000"/>
<rect x="15" y="191" width="2" height="1" fill="#000"/>
<rect x="15" y="198" width="2" height="1" fill="#000"/>
<rect x="15" y="206" width="2" height="1" fill="#000"/>
<rect x="13" y="213" width="4" height="1" fill="#000"/>
<rect x="15" y="221" width="2" height="1" fill="#000"/>
<rect x="15" y="228" width="2" height="1" fill="#000"/>
<rect x="15" y="236" width="2" height="1" fill="#000"/>
<rect x="15" y="243" width="2" height="1" fill="#000"/>
<rect x="9" y="251" width="8" height="1" fill="#000"/>
<text transform="translate(13 249) rotate(-90)" class="rt">60</text>
<rect x="15" y="258" width="2" height="1" fill="#000"/>
<rect x="15" y="266" width="2" height="1" fill="#000"/>
<rect x="15" y="273" width="2" height="1" fill="#000"/>
<rect x="15" y="281" width="2" height="1" fill="#000"/>
<rect x="13" y="288" width="4" height="1" fill="#000"/>
<rect x="15" y="296" width="2" height="1" fill="#000"/>
<rect x="15" y="303" width="2" height="1" fill="#000"/>
<rect x="15" y="311" width="2" height="1" fill="#000"/>
<rect x="15" y="318" width="2" height="1" fill="#000"/>
<rect x="9" y="326" width="8" height="1" fill="#000"/>
<text transform="translate(13 324) rotate(-90)" class="rt">40</text>
<rect x="15" y="333" width="2" height="1" fill="#000"/>
<rect x="15" y="341" width="2" height="1" fill="#000"/>
<rect x="15" y="348" width="2" height="1" fill="#000"/>
<rect x="15" y="356" width="2" height="1" fill="#000"/>
<rect x="13" y="363" width="4" height="1" fill="#000"/>
<rect x="15" y="371" width="2" height="1" fill="#000"/>
<rect x="15" y="378" width="2" height="1" fill="#000"/>
<rect x="15" y="386" width="2" height="1" fill="#000"/>
<rect x="15" y="393" width="2" height="1" fill="#000"/>
<rect x="9" y="401" width="8" height="1" fill="#000"/>
<text transform="translate(13 399) rotate(-90)" class="rt">20</text>
<rect x="15" y="408" width="2" height="1" fill="#000"/>
<rect x="15" y="416" width="2" height="1" fill="#000"/>
<rect x="15" y="423" width="2" height="1" fill="#000"/>
<rect x="15" y="431" width="2" height="1" fill="#000"/>
<rect x="13" y="438" width="4" height="1" fill="#000"/>
<rect x="15" y="446" width="2" height="1" fill="#000"/>
<rect x="15" y="453" width="2" height="1" fill="#000"/>
<rect x="15" y="461" width="2" height="1" fill="#000"/>
<rect x="15" y="468" width="2" height="1" fill="#000"/>
<rect x="9" y="476" width="8" height="1" fill="#000"/>
<text transform="translate(13 474) rotate(-90)" class="rt">0</text>
<rect x="15" y="483" width="2" height="1" fill="#000"/>
<rect x="15" y="491" width="2" height="1" fill="#000"/>
<rect x="15" y="498" width="2" height="1" fill="#000"/>
<rect x="15" y="506" width="2" height="1" fill="#000"/>
<rect x="13" y="513" width="4" height="1" fill="#000"/>
<rect x="15" y="521" width="2" height="1" fill="#000"/>
<rect x="15" y="528" width="2" height="1" fill="#000"/>
<rect x="15" y="536" width="2" height="1" fill="#000"/>
<rect x="15" y="543" width="2" height="1" fill="#000"/>
<rect x="9" y="551" width="8" height="1" fill="#000"/>
<text transform="translate(13 549) rotate(-90)" class="rt">-20</text>
<rect x="15" y="558" width="2" height="1" fill="#000"/>
<rect x="15" y="566" width="2" height="1" fill="#000"/>
<rect x="15" y="573" width="2" height="1" fill="#000"/>
<rect x="15" y="581" width="2" height="1" fill="#000"/>
<rect x="13" y="588" width="4" height="1" fill="#000"/>
<rect x="15" y="596" width="2" height="1" fill="#000"/>
<rect x="15" y="603" width="2" height="1" fill="#000"/>
<rect x="15" y="611" width="2" height="1" fill="#000"/>
<rect x="15" y="618" width="2" height="1" fill="#000"/>
<rect x="9" y="626" width="8" height="1" fill="#000"/>
<text transform="translate(13 624) rotate(-90)" class="rt">-40</text>
<rect x="15" y="633" width="2" height="1" fill="#000"/>
<rect x="15" y="641" width="2" height="1" fill="#000"/>
<rect x="15" y="648" width="2" height="1" fill="#000"/>
<rect x="15" y="656" width="2" height="1" fill="#000"/>
<rect x="13" y="663" width="4" height="1" fill="#000"/>
<rect x="15" y="671" width="2" height="1" fill="#000"/>
<rect x="15" y="678" width="2" height="1" fill="#000"/>
<rect x="15" y="686" width="2" height="1" fill="#000"/>
<rect x="15" y="693" width="2" height="1" fill="#000"/>
<rect x="9" y="701" width="8" height="1" fill="#000"/>
<text transform="translate(13 699) rotate(-90)" class="rt">-60</text>
<rect x="15" y="708" width="2" height="1" fill="#000"/>
<rect x="15" y="716" width="2" height="1" fill="#000"/>
<rect x="15" y="723" width="2" height="1" fill="#000"/>
<rect x="15" y="731" width="2" height="1" fill="#000"/>
<rect x="13" y="738" width="4" height="1" fill="#000"/>
<text transform="translate(12.6 24) rotate(-90)" class="rt" style="font-size:9px">1</text>
</g>
</svg>
</body></html>
